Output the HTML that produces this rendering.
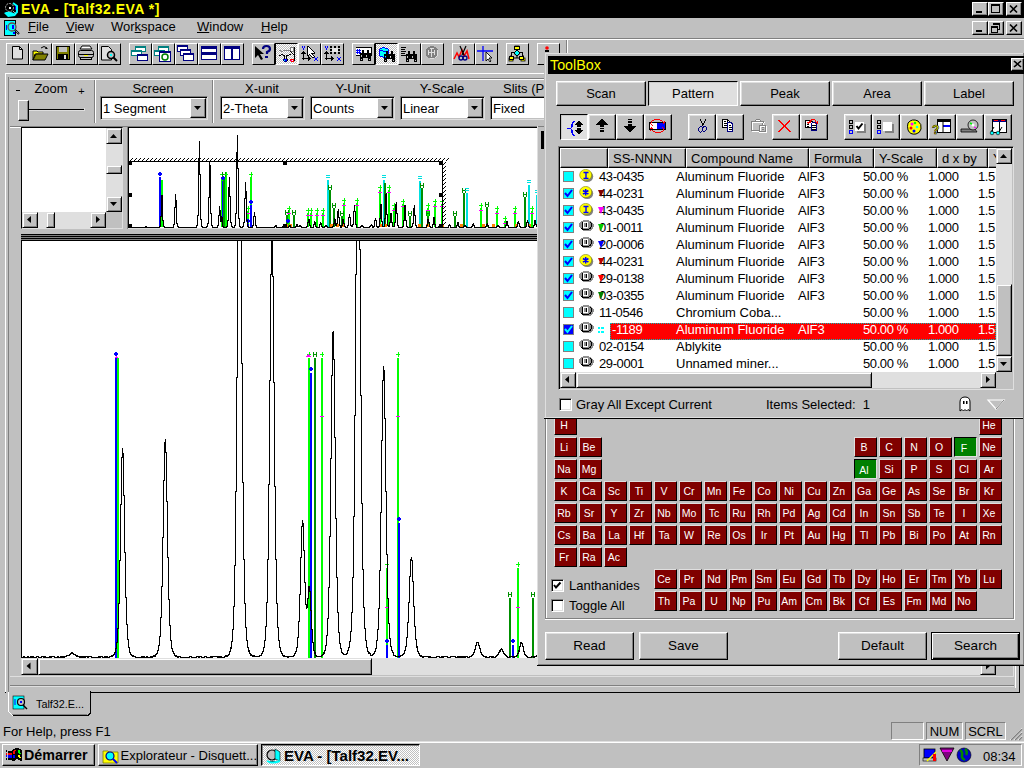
<!DOCTYPE html>
<html><head><meta charset="utf-8"><style>
html,body{margin:0;padding:0;width:1024px;height:768px;overflow:hidden;background:#c0c0c0}
div{position:absolute;box-sizing:border-box}
.t{white-space:pre;line-height:1;font-family:"Liberation Sans",sans-serif}
u{text-decoration:underline;text-underline-offset:1px}
</style></head><body>
<div style="left:0px;top:0px;width:1024px;height:768px;background:#c0c0c0"></div>
<div style="left:0px;top:0px;width:1024px;height:18px;background:#000"></div>
<div class="t" style="left:21px;top:2.15px;font-size:14px;color:#ff0;font-weight:700;letter-spacing:0.5px">EVA - [Talf32.EVA *]</div>
<div style="left:972px;top:2px;width:16px;height:14px;background:#c0c0c0;border-style:solid;border-width:1px;border-color:#fff #000 #000 #fff;box-shadow:inset -1px -1px #808080;"></div>
<div style="left:988px;top:2px;width:16px;height:14px;background:#c0c0c0;border-style:solid;border-width:1px;border-color:#fff #000 #000 #fff;box-shadow:inset -1px -1px #808080;"></div>
<div style="left:1006px;top:2px;width:16px;height:14px;background:#c0c0c0;border-style:solid;border-width:1px;border-color:#fff #000 #000 #fff;box-shadow:inset -1px -1px #808080;"></div>
<div style="left:976px;top:11px;width:6px;height:2px;background:#000"></div>
<div style="left:991px;top:4px;width:9px;height:9px;border:1px solid #000;border-top-width:2px;background:transparent"></div>
<svg style="position:absolute;left:1006px;top:2px;shape-rendering:auto" width="16" height="14" viewBox="0 0 16 14" shape-rendering="crispEdges"><path d="M4 3.5l7 7M11 3.5l-7 7" stroke="#000" stroke-width="1.7"/></svg>
<div class="t" style="left:28px;top:20.00px;font-size:13px;color:#000;font-weight:400;"><u>F</u>ile</div>
<div class="t" style="left:66px;top:20.00px;font-size:13px;color:#000;font-weight:400;"><u>V</u>iew</div>
<div class="t" style="left:111px;top:20.00px;font-size:13px;color:#000;font-weight:400;">Wor<u>k</u>space</div>
<div class="t" style="left:197px;top:20.00px;font-size:13px;color:#000;font-weight:400;"><u>W</u>indow</div>
<div class="t" style="left:261px;top:20.00px;font-size:13px;color:#000;font-weight:400;"><u>H</u>elp</div>
<div style="left:972px;top:21px;width:16px;height:14px;background:#c0c0c0;border-style:solid;border-width:1px;border-color:#fff #000 #000 #fff;box-shadow:inset -1px -1px #808080;"></div>
<div style="left:988px;top:21px;width:16px;height:14px;background:#c0c0c0;border-style:solid;border-width:1px;border-color:#fff #000 #000 #fff;box-shadow:inset -1px -1px #808080;"></div>
<div style="left:1006px;top:21px;width:16px;height:14px;background:#c0c0c0;border-style:solid;border-width:1px;border-color:#fff #000 #000 #fff;box-shadow:inset -1px -1px #808080;"></div>
<div style="left:976px;top:30px;width:6px;height:2px;background:#000"></div>
<svg style="position:absolute;left:988px;top:21px;" width="16" height="14" viewBox="0 0 16 14" shape-rendering="crispEdges"><path d="M5.5 2.5h6v6h-2" fill="none" stroke="#000"/><rect x="5" y="2" width="7" height="2" fill="#000"/><rect x="3.5" y="5.5" width="6" height="6" fill="none" stroke="#000"/><rect x="3" y="5" width="7" height="2" fill="#000"/></svg>
<svg style="position:absolute;left:1006px;top:21px;shape-rendering:auto" width="16" height="14" viewBox="0 0 16 14" shape-rendering="crispEdges"><path d="M4 3.5l7 7M11 3.5l-7 7" stroke="#000" stroke-width="1.7"/></svg>
<div style="left:0px;top:38px;width:1024px;height:1px;background:#808080"></div>
<div style="left:0px;top:39px;width:1024px;height:1px;background:#fff"></div>
<div style="left:6px;top:43px;width:23px;height:22px;background:#c0c0c0;border-style:solid;border-width:1px;border-color:#fff #000 #000 #fff;"></div>
<svg style="position:absolute;left:6px;top:43px;shape-rendering:auto" width="23" height="22" viewBox="0 0 23 22" shape-rendering="crispEdges"><path d="M6.5 3.5h7l3 3v9.5h-10z" fill="#dfdfdf" stroke="#000"/><path d="M13.5 3.5v3h3" fill="none" stroke="#000"/></svg>
<div style="left:29px;top:43px;width:23px;height:22px;background:#c0c0c0;border-style:solid;border-width:1px;border-color:#fff #000 #000 #fff;"></div>
<svg style="position:absolute;left:29px;top:43px;shape-rendering:auto" width="23" height="22" viewBox="0 0 23 22" shape-rendering="crispEdges"><path d="M4 8h4l1 1h5v2h-8l-2 6z" fill="#ff0" stroke="#000"/><path d="M4 17l3-6h12l-3 6z" fill="#808000" stroke="#000"/><path d="M12 5q3-3 6 0" fill="none" stroke="#000"/><path d="M17 4l2 2h-3z" fill="#000"/></svg>
<div style="left:52px;top:43px;width:23px;height:22px;background:#c0c0c0;border-style:solid;border-width:1px;border-color:#fff #000 #000 #fff;"></div>
<svg style="position:absolute;left:52px;top:43px;shape-rendering:auto" width="23" height="22" viewBox="0 0 23 22" shape-rendering="crispEdges"><rect x="4.5" y="3.5" width="13" height="13" fill="#808000" stroke="#000"/><rect x="7" y="4" width="8" height="5" fill="#c0c0c0"/><rect x="6" y="11" width="10" height="6" fill="#000"/><rect x="12" y="12" width="2" height="4" fill="#dfdfdf"/></svg>
<div style="left:75px;top:43px;width:23px;height:22px;background:#c0c0c0;border-style:solid;border-width:1px;border-color:#fff #000 #000 #fff;"></div>
<svg style="position:absolute;left:75px;top:43px;shape-rendering:auto" width="23" height="22" viewBox="0 0 23 22" shape-rendering="crispEdges"><path d="M7 3h8l2 3h-12z" fill="#fff" stroke="#000"/><rect x="3.5" y="7.5" width="15" height="7" rx="2" fill="#c0c0c0" stroke="#000"/><rect x="4" y="11" width="14" height="1" fill="#000"/><rect x="9" y="12" width="4" height="1" fill="#ff0"/><rect x="5.5" y="14.5" width="11" height="2" fill="#c0c0c0" stroke="#000"/></svg>
<div style="left:98px;top:43px;width:23px;height:22px;background:#c0c0c0;border-style:solid;border-width:1px;border-color:#fff #000 #000 #fff;"></div>
<svg style="position:absolute;left:98px;top:43px;shape-rendering:auto" width="23" height="22" viewBox="0 0 23 22" shape-rendering="crispEdges"><path d="M3.5 3.5h7l3 3v10.5h-10z" fill="#dfdfdf" stroke="#000"/><circle cx="13" cy="12" r="3.5" fill="#c0c0c0" stroke="#000" stroke-width="1.5"/><rect x="12" y="11" width="2" height="2" fill="#0ff"/><path d="M15 14l4 4" stroke="#000" stroke-width="2"/></svg>
<div style="left:129px;top:43px;width:23px;height:22px;background:#c0c0c0;border-style:solid;border-width:1px;border-color:#fff #000 #000 #fff;"></div>
<svg style="position:absolute;left:129px;top:43px;shape-rendering:auto" width="23" height="22" viewBox="0 0 23 22" shape-rendering="crispEdges"><rect x="6.5" y="3.5" width="10" height="5" fill="#fff" stroke="#008080"/><rect x="6" y="3" width="11" height="2" fill="#008080"/><rect x="2.5" y="7.5" width="10" height="5" fill="#fff" stroke="#008080"/><rect x="2" y="7" width="11" height="2" fill="#008080"/><rect x="8.5" y="11.5" width="10" height="6" fill="#fff" stroke="#000080"/><rect x="8" y="11" width="11" height="2" fill="#000080"/></svg>
<div style="left:152px;top:43px;width:23px;height:22px;background:#c0c0c0;border-style:solid;border-width:1px;border-color:#fff #000 #000 #fff;"></div>
<svg style="position:absolute;left:152px;top:43px;shape-rendering:auto" width="23" height="22" viewBox="0 0 23 22" shape-rendering="crispEdges"><rect x="6.5" y="3.5" width="10" height="5" fill="#fff" stroke="#008080"/><rect x="6" y="3" width="11" height="2" fill="#008080"/><rect x="2.5" y="7.5" width="10" height="5" fill="#fff" stroke="#008080"/><rect x="2" y="7" width="11" height="2" fill="#008080"/><rect x="7.5" y="8.5" width="11" height="10" fill="#fff" stroke="#000080"/><rect x="7" y="8" width="12" height="2" fill="#000080"/><circle cx="13" cy="14" r="3" fill="none" stroke="#008000" stroke-width="1.5"/></svg>
<div style="left:175px;top:43px;width:23px;height:22px;background:#c0c0c0;border-style:solid;border-width:1px;border-color:#fff #000 #000 #fff;"></div>
<svg style="position:absolute;left:175px;top:43px;shape-rendering:auto" width="23" height="22" viewBox="0 0 23 22" shape-rendering="crispEdges"><rect x="2.5" y="2.5" width="10" height="6" fill="#fff" stroke="#000080"/><rect x="2" y="2" width="11" height="2" fill="#000080"/><rect x="5.5" y="6.5" width="10" height="6" fill="#fff" stroke="#000080"/><rect x="5" y="6" width="11" height="2" fill="#000080"/><rect x="8.5" y="10.5" width="10" height="7" fill="#fff" stroke="#000080"/><rect x="8" y="10" width="11" height="2" fill="#000080"/></svg>
<div style="left:198px;top:43px;width:23px;height:22px;background:#c0c0c0;border-style:solid;border-width:1px;border-color:#fff #000 #000 #fff;"></div>
<svg style="position:absolute;left:198px;top:43px;shape-rendering:auto" width="23" height="22" viewBox="0 0 23 22" shape-rendering="crispEdges"><rect x="3.5" y="3.5" width="15" height="13" fill="#fff" stroke="#000080"/><rect x="3" y="3" width="16" height="3" fill="#000080"/><rect x="3" y="9" width="16" height="3" fill="#000080"/></svg>
<div style="left:221px;top:43px;width:23px;height:22px;background:#c0c0c0;border-style:solid;border-width:1px;border-color:#fff #000 #000 #fff;"></div>
<svg style="position:absolute;left:221px;top:43px;shape-rendering:auto" width="23" height="22" viewBox="0 0 23 22" shape-rendering="crispEdges"><rect x="3.5" y="3.5" width="15" height="13" fill="#fff" stroke="#000080"/><rect x="3" y="3" width="16" height="3" fill="#000080"/><rect x="10" y="3" width="2" height="14" fill="#000080"/></svg>
<div style="left:252px;top:43px;width:23px;height:22px;background:#c0c0c0;border-style:solid;border-width:1px;border-color:#fff #000 #000 #fff;"></div>
<svg style="position:absolute;left:252px;top:43px;shape-rendering:auto" width="23" height="22" viewBox="0 0 23 22" shape-rendering="crispEdges"><path d="M3 3v12l3-3 3 5 2-1-3-5h4z" fill="#000"/><path d="M11 6q0-3 3.5-3t3.5 3q0 2-3 3v2" fill="none" stroke="#000080" stroke-width="2.2"/><rect x="13" y="13" width="3" height="2" fill="#000080"/></svg>
<div style="left:275px;top:43px;width:23px;height:22px;background-color:#fff;background-image:repeating-conic-gradient(#c0c0c0 0 25%, #fff 0 50%);background-size:2px 2px;border-style:solid;border-width:1px;border-color:#000 #fff #fff #000;"></div>
<svg style="position:absolute;left:276px;top:44px;shape-rendering:auto" width="23" height="22" viewBox="0 0 23 22" shape-rendering="crispEdges"></svg>
<div style="left:298px;top:43px;width:23px;height:22px;background:#c0c0c0;border-style:solid;border-width:1px;border-color:#fff #000 #000 #fff;"></div>
<svg style="position:absolute;left:298px;top:43px;shape-rendering:auto" width="23" height="22" viewBox="0 0 23 22" shape-rendering="crispEdges"></svg>
<div style="left:321px;top:43px;width:23px;height:22px;background:#c0c0c0;border-style:solid;border-width:1px;border-color:#fff #000 #000 #fff;"></div>
<svg style="position:absolute;left:321px;top:43px;shape-rendering:auto" width="23" height="22" viewBox="0 0 23 22" shape-rendering="crispEdges"></svg>
<div style="left:352px;top:43px;width:23px;height:22px;background:#c0c0c0;border-style:solid;border-width:1px;border-color:#fff #000 #000 #fff;"></div>
<svg style="position:absolute;left:352px;top:43px;shape-rendering:auto" width="23" height="22" viewBox="0 0 23 22" shape-rendering="crispEdges"></svg>
<div style="left:375px;top:43px;width:23px;height:22px;background-color:#fff;background-image:repeating-conic-gradient(#c0c0c0 0 25%, #fff 0 50%);background-size:2px 2px;border-style:solid;border-width:1px;border-color:#000 #fff #fff #000;"></div>
<svg style="position:absolute;left:376px;top:44px;shape-rendering:auto" width="23" height="22" viewBox="0 0 23 22" shape-rendering="crispEdges"></svg>
<div style="left:398px;top:43px;width:23px;height:22px;background:#c0c0c0;border-style:solid;border-width:1px;border-color:#fff #000 #000 #fff;"></div>
<svg style="position:absolute;left:398px;top:43px;shape-rendering:auto" width="23" height="22" viewBox="0 0 23 22" shape-rendering="crispEdges"></svg>
<div style="left:421px;top:43px;width:23px;height:22px;background:#c0c0c0;border-style:solid;border-width:1px;border-color:#fff #000 #000 #fff;"></div>
<svg style="position:absolute;left:421px;top:43px;shape-rendering:auto" width="23" height="22" viewBox="0 0 23 22" shape-rendering="crispEdges"></svg>
<div style="left:452px;top:43px;width:23px;height:22px;background:#c0c0c0;border-style:solid;border-width:1px;border-color:#fff #000 #000 #fff;"></div>
<svg style="position:absolute;left:452px;top:43px;shape-rendering:auto" width="23" height="22" viewBox="0 0 23 22" shape-rendering="crispEdges"><path d="M2 16l3-6 2 4 3-7 2 6 3-5 2 8" fill="none" stroke="#f00" stroke-width="1.5"/><path d="M8 3l4 9M14 3l-4 9" stroke="#000" stroke-width="1.2"/><circle cx="9" cy="15" r="2" fill="none" stroke="#000080" stroke-width="1.3"/><circle cx="13" cy="15" r="2" fill="none" stroke="#000080" stroke-width="1.3"/></svg>
<div style="left:475px;top:43px;width:23px;height:22px;background:#c0c0c0;border-style:solid;border-width:1px;border-color:#fff #000 #000 #fff;"></div>
<svg style="position:absolute;left:475px;top:43px;shape-rendering:auto" width="23" height="22" viewBox="0 0 23 22" shape-rendering="crispEdges"><path d="M2 8h16M8 3v15" stroke="#00f" stroke-width="1.3"/><path d="M11 9v9l2-2 2 3 1-1-2-3h3z" fill="#fff" stroke="#000" stroke-width="0.9"/></svg>
<div style="left:506px;top:43px;width:23px;height:22px;background:#c0c0c0;border-style:solid;border-width:1px;border-color:#fff #000 #000 #fff;"></div>
<svg style="position:absolute;left:506px;top:43px;shape-rendering:auto" width="23" height="22" viewBox="0 0 23 22" shape-rendering="crispEdges"><rect x="9" y="3" width="4" height="3" fill="#ff0" stroke="#000" stroke-width="0.8"/><path d="M11 6v2M11 13v2M5 15h12M5 12v3M17 12v3" stroke="#000" fill="none"/><path d="M11 8l3 2.5-3 2.5-3-2.5z" fill="#0ff" stroke="#000" stroke-width="0.8"/><rect x="3" y="15" width="4" height="3" fill="#ff0" stroke="#000" stroke-width="0.8"/><rect x="15" y="15" width="4" height="3" fill="#ff0" stroke="#000" stroke-width="0.8"/></svg>
<div style="left:537px;top:43px;width:23px;height:22px;background:#c0c0c0;border-style:solid;border-width:1px;border-color:#fff #000 #000 #fff;"></div>
<svg style="position:absolute;left:537px;top:43px;shape-rendering:auto" width="23" height="22" viewBox="0 0 23 22" shape-rendering="crispEdges"><circle cx="10" cy="5" r="1.8" fill="#f00"/><rect x="8" y="7" width="4" height="2" fill="#000"/></svg>
<div style="left:356px;top:47px;width:16px;height:1px;background:#000"></div>
<div style="left:356px;top:48px;width:15px;height:7px;background:#fff"></div>
<div style="left:356px;top:55px;width:5px;height:1px;background:#000"></div>
<div style="left:371px;top:47px;width:1px;height:9px;background:#000"></div>
<svg style="position:absolute;left:356px;top:49px;" width="5" height="5" viewBox="0 0 5 5" shape-rendering="crispEdges"><path d="M1 0h1v1h-1zM3 0h1v1h-1zM0 1h5v1h-5zM1 2h1v1h-1zM3 2h1v1h-1zM0 3h5v1h-5zM1 4h1v1h-1zM3 4h1v1h-1z" fill="#00f"/></svg>
<svg style="position:absolute;left:360px;top:50px;" width="11" height="11" viewBox="0 0 11 11" shape-rendering="crispEdges"><path d="M2 0h2v1h-2zM7 0h2v1h-2zM2 1h2v1h-2zM7 1h2v1h-2zM2 2h2v1h-2zM7 2h2v1h-2zM0 3h11v1h-11zM0 4h11v1h-11zM0 5h1v1h-1zM2 5h4v1h-4zM7 5h4v1h-4zM0 6h1v1h-1zM2 6h4v1h-4zM7 6h4v1h-4zM0 7h11v1h-11zM0 8h3v1h-3zM8 8h3v1h-3zM0 9h1v1h-1zM2 9h1v1h-1zM8 9h1v1h-1zM10 9h1v1h-1zM0 10h3v1h-3zM8 10h3v1h-3z" fill="#000"/></svg>
<svg style="position:absolute;left:379px;top:47px;" width="11" height="11" viewBox="0 0 11 11" shape-rendering="crispEdges"><path d="M3 0h3v1h-3zM1 1h2v1h-2zM6 1h3v1h-3zM0 2h1v1h-1zM9 2h1v1h-1zM0 3h4v1h-4zM9 3h1v1h-1zM0 4h1v1h-1zM4 4h4v1h-4zM9 4h1v1h-1zM0 5h1v1h-1zM9 5h1v1h-1zM0 6h1v1h-1zM9 6h1v1h-1zM0 7h1v1h-1zM9 7h1v1h-1zM0 8h1v1h-1zM9 8h1v1h-1zM1 9h3v1h-3zM8 9h1v1h-1zM4 10h4v1h-4z" fill="#00f"/><path d="M3 1h3v1h-3zM1 2h8v1h-8zM4 3h5v1h-5zM1 4h3v1h-3zM8 4h1v1h-1zM1 5h8v1h-8zM1 6h8v1h-8zM1 7h8v1h-8zM1 8h8v1h-8zM4 9h4v1h-4z" fill="#0ff"/></svg>
<svg style="position:absolute;left:384px;top:51px;" width="11" height="11" viewBox="0 0 11 11" shape-rendering="crispEdges"><path d="M2 0h2v1h-2zM7 0h2v1h-2zM2 1h2v1h-2zM7 1h2v1h-2zM2 2h2v1h-2zM7 2h2v1h-2zM0 3h11v1h-11zM0 4h11v1h-11zM0 5h1v1h-1zM2 5h4v1h-4zM7 5h4v1h-4zM0 6h1v1h-1zM2 6h4v1h-4zM7 6h4v1h-4zM0 7h11v1h-11zM0 8h3v1h-3zM8 8h3v1h-3zM0 9h1v1h-1zM2 9h1v1h-1zM8 9h1v1h-1zM10 9h1v1h-1zM0 10h3v1h-3zM8 10h3v1h-3z" fill="#000"/></svg>
<svg style="position:absolute;left:401px;top:47px;" width="6" height="9" viewBox="0 0 6 9" shape-rendering="crispEdges"><path d="M0 0h5v1h-5zM0 2h4v1h-4zM0 4h5v1h-5zM0 6h4v1h-4zM0 8h6v1h-6z" fill="#000"/></svg>
<svg style="position:absolute;left:406px;top:51px;" width="11" height="11" viewBox="0 0 11 11" shape-rendering="crispEdges"><path d="M2 0h2v1h-2zM7 0h2v1h-2zM2 1h2v1h-2zM7 1h2v1h-2zM2 2h2v1h-2zM7 2h2v1h-2zM0 3h11v1h-11zM0 4h11v1h-11zM0 5h1v1h-1zM2 5h4v1h-4zM7 5h4v1h-4zM0 6h1v1h-1zM2 6h4v1h-4zM7 6h4v1h-4zM0 7h11v1h-11zM0 8h3v1h-3zM8 8h3v1h-3zM0 9h1v1h-1zM2 9h1v1h-1zM8 9h1v1h-1zM10 9h1v1h-1zM0 10h3v1h-3zM8 10h3v1h-3z" fill="#000"/></svg>
<svg style="position:absolute;left:426px;top:46px;" width="12" height="13" viewBox="0 0 12 13" shape-rendering="crispEdges"><path d="M4 0h4v1h-4zM2 1h8v1h-8zM1 2h3v1h-3zM8 2h3v1h-3zM0 3h5v1h-5zM6 3h6v1h-6zM0 4h2v1h-2zM3 4h2v1h-2zM6 4h2v1h-2zM9 4h2v1h-2zM0 5h2v1h-2zM3 5h2v1h-2zM6 5h2v1h-2zM9 5h2v1h-2zM0 6h2v1h-2zM9 6h2v1h-2zM0 7h2v1h-2zM3 7h2v1h-2zM6 7h2v1h-2zM9 7h2v1h-2zM0 8h2v1h-2zM3 8h2v1h-2zM6 8h2v1h-2zM9 8h2v1h-2zM0 9h5v1h-5zM6 9h5v1h-5zM1 10h4v1h-4zM6 10h4v1h-4zM2 11h7v1h-7z" fill="#808080"/><path d="M4 2h4v1h-4zM5 3h1v1h-1zM2 4h1v1h-1zM5 4h1v1h-1zM8 4h1v1h-1zM11 4h1v1h-1zM2 5h1v1h-1zM5 5h1v1h-1zM8 5h1v1h-1zM11 5h1v1h-1zM2 6h7v1h-7zM11 6h1v1h-1zM2 7h1v1h-1zM5 7h1v1h-1zM8 7h1v1h-1zM11 7h1v1h-1zM2 8h1v1h-1zM5 8h1v1h-1zM8 8h1v1h-1zM11 8h1v1h-1zM5 9h1v1h-1zM11 9h1v1h-1zM5 10h1v1h-1zM10 10h1v1h-1zM9 11h1v1h-1zM4 12h4v1h-4z" fill="#dfdfdf"/></svg>
<svg style="position:absolute;left:298px;top:46px;" width="14" height="15" viewBox="0 0 14 15" shape-rendering="crispEdges"><path d="M4 0h1v1h-1zM6 0h1v1h-1zM4 1h1v1h-1zM6 1h1v1h-1zM5 2h1v1h-1zM5 3h1v1h-1z" fill="#00f"/><path d="M5 5h1v1h-1zM4 6h3v1h-3zM3 7h5v1h-5zM5 8h1v1h-1zM5 9h1v1h-1zM5 10h1v1h-1zM10 10h1v1h-1zM5 11h1v1h-1zM10 11h2v1h-2zM4 12h9v1h-9zM5 13h1v1h-1zM10 13h2v1h-2zM10 14h1v1h-1z" fill="#000"/></svg>
<svg style="position:absolute;left:314px;top:57px;" width="4" height="4" viewBox="0 0 4 4" shape-rendering="crispEdges"><path d="M0 0h1v1h-1zM3 0h1v1h-1zM1 1h2v1h-2zM1 2h2v1h-2zM0 3h1v1h-1zM3 3h1v1h-1z" fill="#00f"/></svg>
<svg style="position:absolute;left:321px;top:46px;" width="14" height="15" viewBox="0 0 14 15" shape-rendering="crispEdges"><path d="M4 0h1v1h-1zM6 0h1v1h-1zM4 1h1v1h-1zM6 1h1v1h-1zM5 2h1v1h-1zM5 3h1v1h-1z" fill="#00f"/><path d="M5 5h1v1h-1zM4 6h3v1h-3zM3 7h5v1h-5zM5 8h1v1h-1zM5 9h1v1h-1zM5 10h1v1h-1zM10 10h1v1h-1zM5 11h1v1h-1zM10 11h2v1h-2zM4 12h9v1h-9zM5 13h1v1h-1zM10 13h2v1h-2zM10 14h1v1h-1z" fill="#000"/></svg>
<svg style="position:absolute;left:337px;top:57px;" width="4" height="4" viewBox="0 0 4 4" shape-rendering="crispEdges"><path d="M0 0h1v1h-1zM3 0h1v1h-1zM1 1h2v1h-2zM1 2h2v1h-2zM0 3h1v1h-1zM3 3h1v1h-1z" fill="#00f"/></svg>
<svg style="position:absolute;left:307px;top:46px;" width="8" height="12" viewBox="0 0 8 12" shape-rendering="crispEdges"><path d="M0 0h2v1h-2zM0 1h1v1h-1zM2 1h1v1h-1zM0 2h1v1h-1zM3 2h1v1h-1zM0 3h1v1h-1zM4 3h1v1h-1zM0 4h1v1h-1zM5 4h1v1h-1zM0 5h1v1h-1zM6 5h1v1h-1zM0 6h1v1h-1zM7 6h1v1h-1zM0 7h1v1h-1zM4 7h4v1h-4zM0 8h1v1h-1zM2 8h1v1h-1zM5 8h1v1h-1zM0 9h2v1h-2zM3 9h1v1h-1zM6 9h1v1h-1zM4 10h1v1h-1zM7 10h1v1h-1zM5 11h2v1h-2z" fill="#000"/><path d="M1 1h1v1h-1zM1 2h2v1h-2zM1 3h3v1h-3zM1 4h4v1h-4zM1 5h5v1h-5zM1 6h6v1h-6zM1 7h3v1h-3zM1 8h1v1h-1zM3 8h2v1h-2zM4 9h2v1h-2zM5 10h2v1h-2z" fill="#fff"/></svg>
<svg style="position:absolute;left:330px;top:46px;" width="10" height="8" viewBox="0 0 10 8" shape-rendering="crispEdges"><path d="M0 0h2v1h-2zM4 0h2v1h-2zM8 0h2v1h-2zM0 1h2v1h-2zM4 1h2v1h-2zM8 1h2v1h-2zM0 3h2v1h-2zM8 3h2v1h-2zM0 4h2v1h-2zM8 4h2v1h-2zM0 6h2v1h-2zM4 6h2v1h-2zM8 6h2v1h-2zM0 7h2v1h-2zM4 7h2v1h-2zM8 7h2v1h-2z" fill="#000"/><path d="M2 2h6v1h-6zM2 3h6v1h-6zM2 4h6v1h-6zM2 5h6v1h-6z" fill="#e8e8e8"/></svg>
<svg style="position:absolute;left:279px;top:47px;" width="16" height="15" viewBox="0 0 16 15" shape-rendering="crispEdges"><path d="M11 0h4v1h-4zM11 1h1v1h-1zM14 1h1v1h-1zM11 2h1v1h-1zM14 2h1v1h-1zM0 3h2v1h-2zM4 3h8v1h-8zM14 3h1v1h-1zM2 4h2v1h-2zM12 4h3v1h-3z" fill="#808080"/><path d="M15 0h1v1h-1zM15 1h1v1h-1zM15 2h1v1h-1zM15 3h1v1h-1zM11 4h1v1h-1zM15 4h1v1h-1zM12 5h1v1h-1zM15 5h1v1h-1zM13 6h1v1h-1zM15 6h1v1h-1zM2 7h2v1h-2zM10 7h2v1h-2zM14 7h2v1h-2zM0 8h2v1h-2zM4 8h2v1h-2zM7 8h3v1h-3zM15 8h1v1h-1zM5 9h1v1h-1zM7 9h1v1h-1zM15 9h1v1h-1zM5 10h1v1h-1zM7 10h1v1h-1zM15 10h1v1h-1zM5 11h1v1h-1zM7 11h1v1h-1zM15 11h1v1h-1zM8 12h1v1h-1zM15 12h1v1h-1zM8 13h1v1h-1zM15 13h1v1h-1z" fill="#000"/><path d="M12 1h2v1h-2zM12 2h2v1h-2zM12 3h2v1h-2zM13 13h1v1h-1z" fill="#fff"/><path d="M4 12h1v1h-1zM4 13h1v1h-1zM5 14h3v1h-3z" fill="#000080"/><path d="M5 12h3v1h-3zM6 13h2v1h-2z" fill="#00f"/><path d="M11 12h4v1h-4zM11 13h1v1h-1zM14 13h1v1h-1zM12 14h3v1h-3z" fill="#f00"/><path d="M5 13h1v1h-1z" fill="#0ff"/><path d="M12 13h1v1h-1z" fill="#f0f"/></svg>
<svg style="position:absolute;left:509px;top:46px;" width="15" height="14" viewBox="0 0 15 14" shape-rendering="crispEdges"><path d="M5 0h6v1h-6zM5 1h1v1h-1zM10 1h1v1h-1zM5 2h1v1h-1zM10 2h1v1h-1zM5 3h6v1h-6zM7 4h2v1h-2zM6 5h1v1h-1zM9 5h1v1h-1zM2 6h4v1h-4zM10 6h4v1h-4zM2 7h1v1h-1zM5 7h1v1h-1zM10 7h1v1h-1zM13 7h1v1h-1zM2 8h1v1h-1zM6 8h1v1h-1zM9 8h1v1h-1zM13 8h1v1h-1zM2 9h1v1h-1zM7 9h2v1h-2zM13 9h1v1h-1zM0 10h5v1h-5zM10 10h5v1h-5zM0 11h1v1h-1zM4 11h1v1h-1zM10 11h1v1h-1zM14 11h1v1h-1zM0 12h1v1h-1zM4 12h1v1h-1zM10 12h1v1h-1zM14 12h1v1h-1zM0 13h5v1h-5zM10 13h5v1h-5z" fill="#000"/><path d="M6 1h4v1h-4zM6 2h4v1h-4zM1 11h3v1h-3zM11 11h3v1h-3zM1 12h3v1h-3zM11 12h3v1h-3z" fill="#ff0"/><path d="M7 5h2v1h-2zM6 6h4v1h-4zM6 7h4v1h-4zM7 8h2v1h-2z" fill="#0ff"/></svg>
<div style="left:566px;top:40px;width:1px;height:13px;background:#808080"></div>
<div style="left:567px;top:40px;width:1px;height:13px;background:#fff"></div>
<div style="left:5px;top:73px;width:540px;height:1px;background:#fff"></div>
<div style="left:5px;top:73px;width:1px;height:620px;background:#fff"></div>
<div style="left:8px;top:77px;width:1px;height:615px;background:#808080"></div>
<div style="left:10px;top:78px;width:535px;height:1px;background:#808080"></div>
<div style="left:10px;top:79px;width:535px;height:1px;background:#fff"></div>
<div class="t" style="left:-149.00px;width:400px;text-align:center;top:82.00px;font-size:13px;color:#000;font-weight:400;">Zoom</div>
<div style="left:16px;top:90px;width:4px;height:1px;background:#000"></div>
<div class="t" style="left:71.50px;width:20px;text-align:center;top:85.69px;font-size:11px;color:#000;font-weight:400;">+</div>
<div style="left:28px;top:109px;width:57px;height:1px;background:#000"></div>
<div style="left:28px;top:110px;width:57px;height:1px;background:#dfdfdf"></div>
<div style="left:84px;top:108px;width:1px;height:3px;background:#dfdfdf"></div>
<div style="left:27px;top:108px;width:1px;height:3px;background:#808080"></div>
<div style="left:18px;top:100px;width:11px;height:21px;background:#c0c0c0;border-style:solid;border-width:1px;border-color:#fff #000 #000 #fff;box-shadow:inset -1px -1px #808080;"></div>
<div style="left:94px;top:80px;width:1px;height:43px;background:#808080"></div>
<div style="left:95px;top:80px;width:1px;height:43px;background:#fff"></div>
<div style="left:212px;top:80px;width:1px;height:43px;background:#808080"></div>
<div style="left:213px;top:80px;width:1px;height:43px;background:#fff"></div>
<div class="t" style="left:-47.00px;width:400px;text-align:center;top:82.00px;font-size:13px;color:#000;font-weight:400;">Screen</div>
<div style="left:100px;top:96px;width:108px;height:24px;background:#fff;border-style:solid;border-width:1px;border-color:#808080 #dfdfdf #dfdfdf #808080;box-shadow:inset 1px 1px #000, inset -1px -1px #c0c0c0;"></div>
<div class="t" style="left:103px;top:102.00px;font-size:13px;color:#000;font-weight:400;">1 Segment</div>
<div style="left:190px;top:98px;width:16px;height:20px;background:#c0c0c0;border-style:solid;border-width:1px;border-color:#fff #000 #000 #fff;box-shadow:inset -1px -1px #808080;"></div>
<svg style="position:absolute;left:190px;top:98px;" width="16" height="20" viewBox="0 0 16 20" shape-rendering="crispEdges"><path d="M4 8h7l-3.5 4z" fill="#000" shape-rendering="auto"/></svg>
<div class="t" style="left:62.00px;width:400px;text-align:center;top:82.00px;font-size:13px;color:#000;font-weight:400;">X-unit</div>
<div style="left:220px;top:96px;width:85px;height:24px;background:#fff;border-style:solid;border-width:1px;border-color:#808080 #dfdfdf #dfdfdf #808080;box-shadow:inset 1px 1px #000, inset -1px -1px #c0c0c0;"></div>
<div class="t" style="left:223px;top:102.00px;font-size:13px;color:#000;font-weight:400;">2-Theta</div>
<div style="left:287px;top:98px;width:16px;height:20px;background:#c0c0c0;border-style:solid;border-width:1px;border-color:#fff #000 #000 #fff;box-shadow:inset -1px -1px #808080;"></div>
<svg style="position:absolute;left:287px;top:98px;" width="16" height="20" viewBox="0 0 16 20" shape-rendering="crispEdges"><path d="M4 8h7l-3.5 4z" fill="#000" shape-rendering="auto"/></svg>
<div class="t" style="left:153.00px;width:400px;text-align:center;top:82.00px;font-size:13px;color:#000;font-weight:400;">Y-Unit</div>
<div style="left:310px;top:96px;width:85px;height:24px;background:#fff;border-style:solid;border-width:1px;border-color:#808080 #dfdfdf #dfdfdf #808080;box-shadow:inset 1px 1px #000, inset -1px -1px #c0c0c0;"></div>
<div class="t" style="left:313px;top:102.00px;font-size:13px;color:#000;font-weight:400;">Counts</div>
<div style="left:377px;top:98px;width:16px;height:20px;background:#c0c0c0;border-style:solid;border-width:1px;border-color:#fff #000 #000 #fff;box-shadow:inset -1px -1px #808080;"></div>
<svg style="position:absolute;left:377px;top:98px;" width="16" height="20" viewBox="0 0 16 20" shape-rendering="crispEdges"><path d="M4 8h7l-3.5 4z" fill="#000" shape-rendering="auto"/></svg>
<div class="t" style="left:242.00px;width:400px;text-align:center;top:82.00px;font-size:13px;color:#000;font-weight:400;">Y-Scale</div>
<div style="left:400px;top:96px;width:85px;height:24px;background:#fff;border-style:solid;border-width:1px;border-color:#808080 #dfdfdf #dfdfdf #808080;box-shadow:inset 1px 1px #000, inset -1px -1px #c0c0c0;"></div>
<div class="t" style="left:403px;top:102.00px;font-size:13px;color:#000;font-weight:400;">Linear</div>
<div style="left:467px;top:98px;width:16px;height:20px;background:#c0c0c0;border-style:solid;border-width:1px;border-color:#fff #000 #000 #fff;box-shadow:inset -1px -1px #808080;"></div>
<svg style="position:absolute;left:467px;top:98px;" width="16" height="20" viewBox="0 0 16 20" shape-rendering="crispEdges"><path d="M4 8h7l-3.5 4z" fill="#000" shape-rendering="auto"/></svg>
<div class="t" style="left:503px;top:82.00px;font-size:13px;color:#000;font-weight:400;">Slits (P</div>
<div style="left:490px;top:96px;width:80px;height:24px;background:#fff;border-style:solid;border-width:1px;border-color:#808080 #dfdfdf #dfdfdf #808080;box-shadow:inset 1px 1px #000, inset -1px -1px #c0c0c0;"></div>
<div class="t" style="left:493px;top:102.00px;font-size:13px;color:#000;font-weight:400;">Fixed</div>
<div style="left:10px;top:126px;width:535px;height:1px;background:#808080"></div>
<div style="left:10px;top:127px;width:11px;height:1px;background:#fff"></div>
<div style="left:21px;top:127px;width:102px;height:102px;background:#fff;border-style:solid;border-width:1px;border-color:#000 #dfdfdf #dfdfdf #000"></div>
<div style="left:106px;top:128px;width:16px;height:84px;background:#dfdfdf"></div>
<div style="left:106px;top:128px;width:16px;height:16px;background:#c0c0c0;border-style:solid;border-width:1px;border-color:#dfdfdf #000 #000 #dfdfdf;box-shadow:inset 1px 1px #fff, inset -1px -1px #808080"></div>
<svg style="position:absolute;left:106px;top:128px;shape-rendering:auto" width="16" height="16" viewBox="0 0 16 16" shape-rendering="crispEdges"><path d="M4.0 10.0h7l-3.5-4z" fill="#000"/></svg>
<div style="left:106px;top:165px;width:16px;height:9px;background:#c0c0c0;border-style:solid;border-width:1px;border-color:#dfdfdf #000 #000 #dfdfdf;box-shadow:inset 1px 1px #fff, inset -1px -1px #808080"></div>
<div style="left:106px;top:196px;width:16px;height:16px;background:#c0c0c0;border-style:solid;border-width:1px;border-color:#dfdfdf #000 #000 #dfdfdf;box-shadow:inset 1px 1px #fff, inset -1px -1px #808080"></div>
<svg style="position:absolute;left:106px;top:196px;shape-rendering:auto" width="16" height="16" viewBox="0 0 16 16" shape-rendering="crispEdges"><path d="M4.0 6.0h7l-3.5 4z" fill="#000"/></svg>
<div style="left:22px;top:212px;width:84px;height:16px;background:#dfdfdf"></div>
<div style="left:22px;top:212px;width:16px;height:16px;background:#c0c0c0;border-style:solid;border-width:1px;border-color:#dfdfdf #000 #000 #dfdfdf;box-shadow:inset 1px 1px #fff, inset -1px -1px #808080"></div>
<svg style="position:absolute;left:22px;top:212px;shape-rendering:auto" width="16" height="16" viewBox="0 0 16 16" shape-rendering="crispEdges"><path d="M9.0 4.0v7l-4-3.5z" fill="#000"/></svg>
<div style="left:46px;top:212px;width:9px;height:16px;background:#c0c0c0;border-style:solid;border-width:1px;border-color:#dfdfdf #000 #000 #dfdfdf;box-shadow:inset 1px 1px #fff, inset -1px -1px #808080"></div>
<div style="left:90px;top:212px;width:16px;height:16px;background:#c0c0c0;border-style:solid;border-width:1px;border-color:#dfdfdf #000 #000 #dfdfdf;box-shadow:inset 1px 1px #fff, inset -1px -1px #808080"></div>
<svg style="position:absolute;left:90px;top:212px;shape-rendering:auto" width="16" height="16" viewBox="0 0 16 16" shape-rendering="crispEdges"><path d="M6.0 4.0v7l4-3.5z" fill="#000"/></svg>
<div style="left:106px;top:212px;width:16px;height:16px;background:#c0c0c0"></div>
<div style="left:127px;top:126px;width:1px;height:103px;background:#808080"></div>
<div style="left:128px;top:127px;width:410px;height:102px;background:#fff;border-style:solid;border-width:1px 0 0 1px;border-color:#000"></div>
<div style="left:537px;top:126px;width:1px;height:540px;background:#dfdfdf"></div>
<div style="left:541px;top:131px;width:3px;height:18px;background:#000"></div>
<div style="left:128px;top:228px;width:410px;height:1px;background:#dfdfdf"></div>
<div style="left:21px;top:234px;width:516px;height:1px;background:#000"></div>
<div style="left:21px;top:236px;width:516px;height:1px;background:#000"></div>
<div style="left:21px;top:238px;width:516px;height:1px;background:#000"></div>
<div style="left:21px;top:240px;width:516px;height:1px;background:#000"></div>
<div style="left:21px;top:235px;width:516px;height:1px;background:#808080"></div>
<div style="left:21px;top:237px;width:516px;height:1px;background:#808080"></div>
<div style="left:21px;top:239px;width:516px;height:1px;background:#808080"></div>
<div style="left:21px;top:241px;width:516px;height:417px;background:#fff;border-left:1px solid #000"></div>
<div style="left:21px;top:658px;width:516px;height:17px;background:#dfdfdf"></div>
<div style="left:21px;top:658px;width:17px;height:17px;background:#c0c0c0;border-style:solid;border-width:1px;border-color:#dfdfdf #000 #000 #dfdfdf;box-shadow:inset 1px 1px #fff, inset -1px -1px #808080"></div>
<svg style="position:absolute;left:21px;top:658px;shape-rendering:auto" width="17" height="17" viewBox="0 0 17 17" shape-rendering="crispEdges"><path d="M9.5 4.5v7l-4-3.5z" fill="#000"/></svg>
<div style="left:38px;top:658px;width:334px;height:17px;background:#c0c0c0;border-style:solid;border-width:1px;border-color:#dfdfdf #000 #000 #dfdfdf;box-shadow:inset 1px 1px #fff, inset -1px -1px #808080"></div>
<div style="left:10px;top:676px;width:1004px;height:1px;background:#dfdfdf"></div>
<div style="left:10px;top:685px;width:1004px;height:1px;background:#808080"></div>
<div style="left:10px;top:686px;width:1004px;height:1px;background:#dfdfdf"></div>
<svg style="position:absolute;left:0px;top:0px;clip-path:inset(241px 487px 110px 22px)" width="1024" height="768" viewBox="0 0 1024 768" shape-rendering="crispEdges"><g><rect x="115" y="358" width="2" height="300" fill="#0000ff"/><rect x="117" y="358" width="2" height="300" fill="#00ff00"/><rect x="308" y="358" width="2" height="300" fill="#00ff00"/><rect x="310" y="373" width="2" height="285" fill="#0000ff"/><rect x="314" y="358" width="2" height="300" fill="#009000"/><rect x="321" y="358" width="2" height="300" fill="#00ff00"/><rect x="386" y="568" width="2" height="90" fill="#00ff00"/><rect x="386" y="645" width="2" height="13" fill="#0000ff"/><rect x="397" y="358" width="2" height="300" fill="#00ff00"/><rect x="398" y="523" width="2" height="135" fill="#0000ff"/><rect x="509" y="598" width="2" height="60" fill="#009000"/><rect x="512" y="645" width="2" height="13" fill="#0000ff"/><rect x="517" y="568" width="2" height="90" fill="#00ff00"/><rect x="532" y="598" width="2" height="60" fill="#009000"/><path d="M115 352h2v1h1v2h-1v1h-2v-1h-1v-2h1z" fill="#0000ff"/><path d="M307 354h4v1h-4zM309 352h1v5h-1z" fill="#00ff00"/><path d="M310 367h2v1h1v2h-1v1h-2v-1h-1v-2h1z" fill="#0000ff"/><path d="M313 352h1v5h-1zM316 352h1v5h-1zM314 354h2v1h-2z" fill="#009000"/><path d="M320 354h4v1h-4zM322 352h1v5h-1z" fill="#00ff00"/><path d="M385 564h4v1h-4zM387 562h1v5h-1z" fill="#00ff00"/><path d="M386 639h2v1h1v2h-1v1h-2v-1h-1v-2h1z" fill="#0000ff"/><path d="M396 354h4v1h-4zM398 352h1v5h-1z" fill="#00ff00"/><path d="M398 517h2v1h1v2h-1v1h-2v-1h-1v-2h1z" fill="#0000ff"/><path d="M508 592h1v5h-1zM511 592h1v5h-1zM509 594h2v1h-2z" fill="#009000"/><path d="M512 639h2v1h1v2h-1v1h-2v-1h-1v-2h1z" fill="#0000ff"/><path d="M516 564h4v1h-4zM518 562h1v5h-1z" fill="#00ff00"/><path d="M531 592h1v5h-1zM534 592h1v5h-1zM532 594h2v1h-2z" fill="#009000"/><rect x="320" y="416" width="4" height="1" fill="#f0f"/><rect x="396" y="416" width="4" height="1" fill="#f0f"/><rect x="385" y="607" width="4" height="1" fill="#f0f"/><rect x="516" y="607" width="4" height="1" fill="#f0f"/><path d="M114 358h4l-2-2z" fill="#f0f"/><path d="M306 357h5l-2.5-3z" fill="#f0f"/></g><path d="M22 657h1v1h-1zM23 656h1v2h-1zM24 656h1v2h-1zM25 657h1v1h-1zM26 657h1v1h-1zM27 656h1v2h-1zM28 656h1v2h-1zM29 657h1v1h-1zM30 656h1v2h-1zM31 656h1v2h-1zM32 656h1v2h-1zM33 656h1v2h-1zM34 657h1v1h-1zM35 657h1v1h-1zM36 656h1v2h-1zM37 656h1v1h-1zM38 656h1v2h-1zM39 657h1v1h-1zM40 657h1v1h-1zM41 656h1v2h-1zM42 656h1v1h-1zM43 656h1v2h-1zM44 656h1v2h-1zM45 656h1v2h-1zM46 657h1v1h-1zM47 657h1v1h-1zM48 657h1v1h-1zM49 656h1v2h-1zM50 656h1v2h-1zM51 656h1v2h-1zM52 656h1v1h-1zM53 656h1v1h-1zM54 656h1v2h-1zM55 657h1v1h-1zM56 657h1v1h-1zM57 656h1v2h-1zM58 656h1v2h-1zM59 657h1v1h-1zM60 656h1v2h-1zM61 656h1v2h-1zM62 656h1v2h-1zM63 656h1v2h-1zM64 656h1v2h-1zM65 656h1v1h-1zM66 655h1v2h-1zM67 655h1v1h-1zM68 655h1v1h-1zM69 654h1v2h-1zM70 653h1v2h-1zM71 652h1v2h-1zM72 652h1v2h-1zM73 653h1v2h-1zM74 654h1v1h-1zM75 654h1v2h-1zM76 655h1v2h-1zM77 655h1v2h-1zM78 656h1v1h-1zM79 656h1v2h-1zM80 656h1v2h-1zM81 656h1v2h-1zM82 656h1v2h-1zM83 656h1v2h-1zM84 656h1v2h-1zM85 656h1v2h-1zM86 656h1v1h-1zM87 656h1v2h-1zM88 656h1v2h-1zM89 656h1v1h-1zM90 656h1v1h-1zM91 656h1v2h-1zM92 657h1v1h-1zM93 657h1v1h-1zM94 657h1v1h-1zM95 657h1v1h-1zM96 657h1v1h-1zM97 657h1v1h-1zM98 656h1v2h-1zM99 656h1v2h-1zM100 656h1v2h-1zM101 656h1v1h-1zM102 656h1v2h-1zM103 657h1v1h-1zM104 656h1v2h-1zM105 656h1v2h-1zM106 656h1v2h-1zM107 656h1v2h-1zM108 657h1v1h-1zM109 656h1v2h-1zM110 656h1v1h-1zM111 655h1v2h-1zM112 655h1v2h-1zM113 654h1v2h-1zM114 652h1v3h-1zM115 648h1v5h-1zM116 642h1v7h-1zM117 628h1v15h-1zM118 603h1v26h-1zM119 560h1v44h-1zM120 504h1v57h-1zM121 457h1v48h-1zM122 448h1v10h-1zM123 453h1v43h-1zM124 495h1v58h-1zM125 552h1v46h-1zM126 597h1v28h-1zM127 624h1v16h-1zM128 639h1v9h-1zM129 647h1v6h-1zM130 652h1v3h-1zM131 654h1v2h-1zM132 655h1v2h-1zM133 655h1v2h-1zM134 656h1v1h-1zM135 656h1v2h-1zM136 657h1v1h-1zM137 657h1v1h-1zM138 657h1v1h-1zM139 657h1v1h-1zM140 657h1v1h-1zM141 656h1v2h-1zM142 656h1v2h-1zM143 656h1v2h-1zM144 656h1v2h-1zM145 657h1v1h-1zM146 656h1v2h-1zM147 656h1v2h-1zM148 657h1v1h-1zM149 657h1v1h-1zM150 656h1v2h-1zM151 656h1v2h-1zM152 656h1v2h-1zM153 655h1v2h-1zM154 655h1v2h-1zM155 654h1v3h-1zM156 653h1v2h-1zM157 650h1v4h-1zM158 645h1v6h-1zM159 636h1v10h-1zM160 617h1v20h-1zM161 586h1v32h-1zM162 537h1v50h-1zM163 480h1v58h-1zM164 442h1v39h-1zM165 439h1v14h-1zM166 452h1v50h-1zM167 501h1v57h-1zM168 557h1v43h-1zM169 599h1v27h-1zM170 625h1v16h-1zM171 640h1v9h-1zM172 648h1v4h-1zM173 651h1v3h-1zM174 653h1v3h-1zM175 655h1v2h-1zM176 655h1v2h-1zM177 656h1v2h-1zM178 656h1v2h-1zM179 656h1v1h-1zM180 656h1v2h-1zM181 657h1v1h-1zM182 657h1v1h-1zM183 657h1v1h-1zM184 657h1v1h-1zM185 657h1v1h-1zM186 657h1v1h-1zM187 657h1v1h-1zM188 657h1v1h-1zM189 656h1v2h-1zM190 656h1v1h-1zM191 656h1v2h-1zM192 657h1v1h-1zM193 657h1v1h-1zM194 657h1v1h-1zM195 657h1v1h-1zM196 656h1v2h-1zM197 656h1v1h-1zM198 656h1v2h-1zM199 656h1v2h-1zM200 656h1v1h-1zM201 656h1v2h-1zM202 657h1v1h-1zM203 657h1v1h-1zM204 656h1v2h-1zM205 656h1v1h-1zM206 656h1v2h-1zM207 657h1v1h-1zM208 657h1v1h-1zM209 657h1v1h-1zM210 656h1v2h-1zM211 656h1v2h-1zM212 656h1v2h-1zM213 656h1v1h-1zM214 656h1v1h-1zM215 656h1v1h-1zM216 656h1v1h-1zM217 656h1v2h-1zM218 656h1v2h-1zM219 656h1v2h-1zM220 656h1v2h-1zM221 656h1v2h-1zM222 657h1v1h-1zM223 657h1v1h-1zM224 656h1v2h-1zM225 655h1v2h-1zM226 655h1v2h-1zM227 655h1v2h-1zM228 654h1v2h-1zM229 651h1v4h-1zM230 647h1v5h-1zM231 641h1v8h-1zM232 629h1v13h-1zM233 606h1v24h-1zM234 565h1v42h-1zM235 491h1v75h-1zM236 377h1v115h-1zM237 241h1v137h-1zM241 241h1v123h-1zM242 363h1v120h-1zM243 482h1v78h-1zM244 559h1v45h-1zM245 603h1v25h-1zM246 627h1v14h-1zM247 640h1v8h-1zM248 647h1v5h-1zM249 650h1v4h-1zM250 653h1v3h-1zM251 654h1v2h-1zM252 655h1v2h-1zM253 655h1v2h-1zM254 655h1v2h-1zM255 656h1v1h-1zM256 656h1v1h-1zM257 656h1v1h-1zM258 656h1v1h-1zM259 655h1v2h-1zM260 655h1v1h-1zM261 653h1v3h-1zM262 651h1v3h-1zM263 647h1v5h-1zM264 640h1v8h-1zM265 626h1v15h-1zM266 602h1v25h-1zM267 559h1v44h-1zM268 484h1v76h-1zM269 380h1v105h-1zM270 274h1v107h-1zM271 241h1v34h-1zM272 241h1v36h-1zM273 276h1v107h-1zM274 382h1v105h-1zM275 486h1v74h-1zM276 559h1v45h-1zM277 603h1v25h-1zM278 627h1v14h-1zM279 640h1v8h-1zM280 647h1v5h-1zM281 651h1v3h-1zM282 653h1v3h-1zM283 655h1v2h-1zM284 655h1v2h-1zM285 656h1v1h-1zM286 656h1v1h-1zM287 656h1v2h-1zM288 656h1v2h-1zM289 656h1v1h-1zM290 656h1v1h-1zM291 656h1v1h-1zM292 656h1v1h-1zM293 655h1v2h-1zM294 653h1v3h-1zM295 651h1v3h-1zM296 647h1v5h-1zM297 637h1v11h-1zM298 621h1v17h-1zM299 594h1v28h-1zM300 557h1v38h-1zM301 526h1v32h-1zM302 520h1v7h-1zM303 523h1v28h-1zM304 550h1v33h-1zM305 582h1v23h-1zM306 604h1v5h-1zM307 598h1v10h-1zM308 586h1v13h-1zM309 586h1v6h-1zM310 591h1v20h-1zM311 610h1v20h-1zM312 629h1v14h-1zM313 642h1v9h-1zM314 650h1v4h-1zM315 652h1v4h-1zM316 655h1v2h-1zM317 656h1v1h-1zM318 656h1v1h-1zM319 656h1v1h-1zM320 656h1v1h-1zM321 655h1v2h-1zM322 654h1v2h-1zM323 652h1v3h-1zM324 650h1v4h-1zM325 645h1v6h-1zM326 635h1v11h-1zM327 618h1v18h-1zM328 587h1v32h-1zM329 536h1v52h-1zM330 458h1v79h-1zM331 375h1v84h-1zM332 332h1v44h-1zM333 331h1v29h-1zM334 359h1v79h-1zM335 437h1v82h-1zM336 518h1v60h-1zM337 577h1v36h-1zM338 612h1v21h-1zM339 632h1v12h-1zM340 643h1v6h-1zM341 648h1v5h-1zM342 652h1v2h-1zM343 653h1v2h-1zM344 654h1v1h-1zM345 654h1v1h-1zM346 653h1v2h-1zM347 650h1v4h-1zM348 647h1v4h-1zM349 641h1v7h-1zM350 631h1v11h-1zM351 612h1v20h-1zM352 577h1v36h-1zM353 516h1v62h-1zM354 415h1v102h-1zM355 274h1v142h-1zM356 241h1v34h-1zM359 241h1v9h-1zM360 249h1v147h-1zM361 395h1v109h-1zM362 503h1v67h-1zM363 569h1v39h-1zM364 607h1v22h-1zM365 628h1v13h-1zM366 640h1v8h-1zM367 647h1v5h-1zM368 651h1v3h-1zM369 652h1v2h-1zM370 653h1v3h-1zM371 655h1v1h-1zM372 654h1v2h-1zM373 653h1v2h-1zM374 651h1v3h-1zM375 648h1v4h-1zM376 640h1v9h-1zM377 629h1v12h-1zM378 608h1v22h-1zM379 570h1v39h-1zM380 512h1v59h-1zM381 440h1v73h-1zM382 380h1v61h-1zM383 366h1v15h-1zM384 370h1v49h-1zM385 418h1v74h-1zM386 491h1v64h-1zM387 554h1v45h-1zM388 598h1v26h-1zM389 623h1v16h-1zM390 638h1v9h-1zM391 646h1v5h-1zM392 650h1v3h-1zM393 652h1v4h-1zM394 655h1v1h-1zM395 655h1v2h-1zM396 656h1v1h-1zM397 656h1v1h-1zM398 656h1v1h-1zM399 656h1v1h-1zM400 655h1v2h-1zM401 655h1v1h-1zM402 654h1v2h-1zM403 653h1v2h-1zM404 650h1v4h-1zM405 646h1v5h-1zM406 637h1v10h-1zM407 622h1v16h-1zM408 602h1v21h-1zM409 576h1v27h-1zM410 559h1v18h-1zM411 557h1v4h-1zM412 560h1v22h-1zM413 581h1v26h-1zM414 606h1v21h-1zM415 626h1v14h-1zM416 639h1v9h-1zM417 646h1v6h-1zM418 651h1v3h-1zM419 653h1v3h-1zM420 655h1v2h-1zM421 655h1v2h-1zM422 656h1v2h-1zM423 656h1v2h-1zM424 656h1v1h-1zM425 656h1v1h-1zM426 656h1v1h-1zM427 656h1v1h-1zM428 656h1v2h-1zM429 656h1v2h-1zM430 656h1v2h-1zM431 657h1v1h-1zM432 657h1v1h-1zM433 657h1v1h-1zM434 657h1v1h-1zM435 657h1v1h-1zM436 656h1v2h-1zM437 656h1v1h-1zM438 656h1v1h-1zM439 656h1v2h-1zM440 657h1v1h-1zM441 656h1v2h-1zM442 656h1v2h-1zM443 656h1v2h-1zM444 656h1v1h-1zM445 656h1v1h-1zM446 656h1v1h-1zM447 656h1v2h-1zM448 657h1v1h-1zM449 657h1v1h-1zM450 656h1v2h-1zM451 656h1v1h-1zM452 656h1v1h-1zM453 656h1v1h-1zM454 656h1v1h-1zM455 656h1v2h-1zM456 657h1v1h-1zM457 656h1v2h-1zM458 656h1v2h-1zM459 656h1v2h-1zM460 656h1v2h-1zM461 656h1v2h-1zM462 656h1v2h-1zM463 656h1v2h-1zM464 656h1v2h-1zM465 656h1v2h-1zM466 656h1v1h-1zM467 656h1v2h-1zM468 657h1v1h-1zM469 656h1v2h-1zM470 656h1v1h-1zM471 655h1v2h-1zM472 654h1v2h-1zM473 652h1v3h-1zM474 649h1v4h-1zM475 645h1v5h-1zM476 642h1v4h-1zM477 642h1v1h-1zM478 642h1v4h-1zM479 645h1v4h-1zM480 648h1v5h-1zM481 652h1v3h-1zM482 654h1v2h-1zM483 655h1v2h-1zM484 656h1v1h-1zM485 656h1v2h-1zM486 656h1v2h-1zM487 657h1v1h-1zM488 657h1v1h-1zM489 656h1v2h-1zM490 656h1v1h-1zM491 656h1v2h-1zM492 656h1v2h-1zM493 656h1v2h-1zM494 657h1v1h-1zM495 656h1v2h-1zM496 655h1v2h-1zM497 654h1v2h-1zM498 652h1v3h-1zM499 650h1v3h-1zM500 649h1v3h-1zM501 648h1v2h-1zM502 649h1v3h-1zM503 651h1v3h-1zM504 653h1v2h-1zM505 654h1v2h-1zM506 655h1v2h-1zM507 656h1v2h-1zM508 657h1v1h-1zM509 656h1v2h-1zM510 656h1v1h-1zM511 656h1v1h-1zM512 656h1v1h-1zM513 656h1v2h-1zM514 656h1v2h-1zM515 656h1v1h-1zM516 655h1v2h-1zM517 653h1v3h-1zM518 650h1v4h-1zM519 646h1v6h-1zM520 642h1v5h-1zM521 642h1v2h-1zM522 643h1v4h-1zM523 646h1v6h-1zM524 651h1v4h-1zM525 654h1v2h-1zM526 655h1v2h-1zM527 656h1v2h-1zM528 657h1v1h-1zM529 657h1v1h-1zM530 657h1v1h-1zM531 656h1v2h-1zM532 656h1v1h-1zM533 656h1v2h-1zM534 656h1v2h-1zM535 656h1v1h-1zM536 655h1v2h-1z" fill="#000"/></svg>
<svg style="position:absolute;left:0px;top:0px;clip-path:inset(128px 487px 540px 128px)" width="1024" height="768" viewBox="0 0 1024 768" shape-rendering="crispEdges"><g><rect x="159" y="177" width="2" height="50" fill="#0000ff"/><rect x="161" y="180" width="2" height="47" fill="#00ff00"/><rect x="221" y="177" width="2" height="50" fill="#00ff00"/><rect x="222" y="181" width="2" height="46" fill="#0000ff"/><rect x="223" y="177" width="2" height="50" fill="#009000"/><rect x="225" y="177" width="2" height="50" fill="#00ff00"/><rect x="247" y="211" width="2" height="16" fill="#00ff00"/><rect x="247" y="224" width="2" height="3" fill="#0000ff"/><rect x="250" y="177" width="2" height="50" fill="#00ff00"/><rect x="250" y="205" width="2" height="22" fill="#0000ff"/><rect x="286" y="215" width="2" height="12" fill="#009000"/><rect x="287" y="224" width="2" height="3" fill="#0000ff"/><rect x="288" y="211" width="2" height="16" fill="#00ff00"/><rect x="293" y="215" width="2" height="12" fill="#009000"/><rect x="307" y="213" width="2" height="14" fill="#00ff00"/><rect x="310" y="213" width="2" height="14" fill="#00ff00"/><rect x="316" y="213" width="2" height="14" fill="#00ff00"/><rect x="322" y="213" width="2" height="14" fill="#00ff00"/><rect x="327" y="180" width="2" height="47" fill="#00e0e0"/><rect x="329" y="190" width="2" height="37" fill="#009000"/><rect x="333" y="208" width="2" height="19" fill="#009000"/><rect x="341" y="216" width="2" height="11" fill="#009000"/><rect x="343" y="203" width="2" height="24" fill="#00ff00"/><rect x="356" y="203" width="2" height="24" fill="#00ff00"/><rect x="379" y="190" width="2" height="37" fill="#00ff00"/><rect x="383" y="180" width="2" height="47" fill="#00e0e0"/><rect x="384" y="183" width="2" height="44" fill="#009000"/><rect x="388" y="190" width="2" height="37" fill="#00ff00"/><rect x="393" y="208" width="2" height="19" fill="#00ff00"/><rect x="402" y="204" width="2" height="23" fill="#00ff00"/><rect x="409" y="216" width="2" height="11" fill="#009000"/><rect x="419" y="181" width="2" height="46" fill="#00e0e0"/><rect x="421" y="188" width="2" height="39" fill="#009000"/><rect x="427" y="208" width="2" height="19" fill="#00ff00"/><rect x="427" y="216" width="2" height="11" fill="#009000"/><rect x="434" y="204" width="2" height="23" fill="#00ff00"/><rect x="441" y="204" width="2" height="23" fill="#00ff00"/><rect x="454" y="216" width="2" height="11" fill="#009000"/><rect x="463" y="193" width="2" height="34" fill="#009000"/><rect x="466" y="193" width="2" height="34" fill="#00e0e0"/><rect x="480" y="208" width="2" height="19" fill="#00ff00"/><rect x="486" y="207" width="2" height="20" fill="#009000"/><rect x="496" y="211" width="2" height="16" fill="#00ff00"/><rect x="504" y="221" width="2" height="6" fill="#00ff00"/><rect x="514" y="211" width="2" height="16" fill="#00ff00"/><rect x="524" y="197" width="2" height="30" fill="#009000"/><rect x="528" y="185" width="2" height="42" fill="#00e0e0"/><rect x="531" y="211" width="2" height="16" fill="#00ff00"/><rect x="536" y="195" width="2" height="32" fill="#00e0e0"/><path d="M159 172h2v1h1v2h-1v1h-2v-1h-1v-2h1z" fill="#0000ff"/><path d="M220 174h4v1h-4zM222 172h1v5h-1z" fill="#00ff00"/><path d="M222 176h2v1h1v2h-1v1h-2v-1h-1v-2h1z" fill="#0000ff"/><path d="M222 172h1v5h-1zM225 172h1v5h-1zM223 174h2v1h-2z" fill="#009000"/><path d="M224 174h4v1h-4zM226 172h1v5h-1z" fill="#00ff00"/><path d="M246 208h4v1h-4zM248 206h1v5h-1z" fill="#00ff00"/><rect x="246" y="213" width="4" height="1" fill="#f0f"/><path d="M247 219h2v1h1v2h-1v1h-2v-1h-1v-2h1z" fill="#0000ff"/><path d="M249 174h4v1h-4zM251 172h1v5h-1z" fill="#00ff00"/><path d="M250 200h2v1h1v2h-1v1h-2v-1h-1v-2h1z" fill="#0000ff"/><path d="M285 210h1v5h-1zM288 210h1v5h-1zM286 212h2v1h-2z" fill="#009000"/><path d="M287 219h2v1h1v2h-1v1h-2v-1h-1v-2h1z" fill="#0000ff"/><path d="M287 208h4v1h-4zM289 206h1v5h-1z" fill="#00ff00"/><rect x="287" y="213" width="4" height="1" fill="#f0f"/><path d="M292 210h1v5h-1zM295 210h1v5h-1zM293 212h2v1h-2z" fill="#009000"/><path d="M306 210h4v1h-4zM308 208h1v5h-1z" fill="#00ff00"/><rect x="306" y="215" width="4" height="1" fill="#f0f"/><path d="M309 210h4v1h-4zM311 208h1v5h-1z" fill="#00ff00"/><rect x="309" y="215" width="4" height="1" fill="#f0f"/><path d="M315 210h4v1h-4zM317 208h1v5h-1z" fill="#00ff00"/><rect x="315" y="215" width="4" height="1" fill="#f0f"/><path d="M321 210h4v1h-4zM323 208h1v5h-1z" fill="#00ff00"/><rect x="321" y="215" width="4" height="1" fill="#f0f"/><path d="M326 175h4v1h-4zM326 177h4v1h-4z" fill="#00e0e0"/><path d="M328 185h1v5h-1zM331 185h1v5h-1zM329 187h2v1h-2z" fill="#009000"/><path d="M332 203h1v5h-1zM335 203h1v5h-1zM333 205h2v1h-2z" fill="#009000"/><path d="M340 211h1v5h-1zM343 211h1v5h-1zM341 213h2v1h-2z" fill="#009000"/><path d="M342 200h4v1h-4zM344 198h1v5h-1z" fill="#00ff00"/><rect x="342" y="205" width="4" height="1" fill="#f0f"/><path d="M355 200h4v1h-4zM357 198h1v5h-1z" fill="#00ff00"/><rect x="355" y="205" width="4" height="1" fill="#f0f"/><path d="M378 187h4v1h-4zM380 185h1v5h-1z" fill="#00ff00"/><rect x="378" y="192" width="4" height="1" fill="#f0f"/><path d="M382 175h4v1h-4zM382 177h4v1h-4z" fill="#00e0e0"/><path d="M387 187h4v1h-4zM389 185h1v5h-1z" fill="#00ff00"/><rect x="387" y="192" width="4" height="1" fill="#f0f"/><path d="M392 205h4v1h-4zM394 203h1v5h-1z" fill="#00ff00"/><rect x="392" y="210" width="4" height="1" fill="#f0f"/><path d="M401 201h4v1h-4zM403 199h1v5h-1z" fill="#00ff00"/><rect x="401" y="206" width="4" height="1" fill="#f0f"/><path d="M408 211h1v5h-1zM411 211h1v5h-1zM409 213h2v1h-2z" fill="#009000"/><path d="M418 176h4v1h-4zM418 178h4v1h-4z" fill="#00e0e0"/><path d="M420 183h1v5h-1zM423 183h1v5h-1zM421 185h2v1h-2z" fill="#009000"/><path d="M426 205h4v1h-4zM428 203h1v5h-1z" fill="#00ff00"/><rect x="426" y="210" width="4" height="1" fill="#f0f"/><path d="M426 211h1v5h-1zM429 211h1v5h-1zM427 213h2v1h-2z" fill="#009000"/><path d="M433 201h4v1h-4zM435 199h1v5h-1z" fill="#00ff00"/><rect x="433" y="206" width="4" height="1" fill="#f0f"/><path d="M440 201h4v1h-4zM442 199h1v5h-1z" fill="#00ff00"/><rect x="440" y="206" width="4" height="1" fill="#f0f"/><path d="M453 211h1v5h-1zM456 211h1v5h-1zM454 213h2v1h-2z" fill="#009000"/><path d="M462 188h1v5h-1zM465 188h1v5h-1zM463 190h2v1h-2z" fill="#009000"/><path d="M465 188h4v1h-4zM465 190h4v1h-4z" fill="#00e0e0"/><path d="M479 205h4v1h-4zM481 203h1v5h-1z" fill="#00ff00"/><rect x="479" y="210" width="4" height="1" fill="#f0f"/><path d="M485 202h1v5h-1zM488 202h1v5h-1zM486 204h2v1h-2z" fill="#009000"/><path d="M495 208h4v1h-4zM497 206h1v5h-1z" fill="#00ff00"/><rect x="495" y="213" width="4" height="1" fill="#f0f"/><path d="M503 218h4v1h-4zM505 216h1v5h-1z" fill="#00ff00"/><rect x="503" y="223" width="4" height="1" fill="#f0f"/><path d="M513 208h4v1h-4zM515 206h1v5h-1z" fill="#00ff00"/><rect x="513" y="213" width="4" height="1" fill="#f0f"/><path d="M523 192h1v5h-1zM526 192h1v5h-1zM524 194h2v1h-2z" fill="#009000"/><path d="M527 180h4v1h-4zM527 182h4v1h-4z" fill="#00e0e0"/><path d="M530 208h4v1h-4zM532 206h1v5h-1z" fill="#00ff00"/><rect x="530" y="213" width="4" height="1" fill="#f0f"/><path d="M535 190h4v1h-4zM535 192h4v1h-4z" fill="#00e0e0"/><rect x="285" y="224" width="3" height="3" fill="#ff8000"/><rect x="289" y="224" width="3" height="3" fill="#ff8000"/><rect x="330" y="224" width="3" height="3" fill="#ff8000"/><rect x="336" y="224" width="3" height="3" fill="#ff8000"/><rect x="342" y="224" width="3" height="3" fill="#ff8000"/><rect x="380" y="224" width="3" height="3" fill="#ff8000"/><rect x="384" y="224" width="3" height="3" fill="#ff8000"/><rect x="418" y="224" width="3" height="3" fill="#ff8000"/><rect x="426" y="224" width="3" height="3" fill="#ff8000"/><rect x="441" y="224" width="3" height="3" fill="#ff8000"/><rect x="460" y="224" width="3" height="3" fill="#ff8000"/><rect x="482" y="224" width="3" height="3" fill="#ff8000"/><rect x="492" y="224" width="3" height="3" fill="#ff8000"/><rect x="515" y="224" width="3" height="3" fill="#ff8000"/><rect x="528" y="224" width="3" height="3" fill="#ff8000"/><rect x="536" y="224" width="3" height="3" fill="#ff8000"/></g><path d="M129 227h1v1h-1zM130 227h1v1h-1zM131 227h1v1h-1zM132 227h1v1h-1zM133 227h1v1h-1zM134 227h1v1h-1zM135 227h1v1h-1zM136 227h1v1h-1zM137 227h1v1h-1zM138 227h1v1h-1zM139 227h1v1h-1zM140 227h1v1h-1zM141 227h1v1h-1zM142 227h1v1h-1zM143 227h1v1h-1zM144 227h1v1h-1zM145 226h1v2h-1zM146 226h1v2h-1zM147 227h1v1h-1zM148 227h1v1h-1zM149 227h1v1h-1zM150 227h1v1h-1zM151 227h1v1h-1zM152 227h1v1h-1zM153 227h1v1h-1zM154 227h1v1h-1zM155 227h1v1h-1zM156 227h1v1h-1zM157 227h1v1h-1zM158 227h1v1h-1zM159 226h1v2h-1zM160 216h1v11h-1zM161 195h1v22h-1zM162 195h1v26h-1zM163 220h1v7h-1zM164 226h1v2h-1zM165 227h1v1h-1zM166 227h1v1h-1zM167 227h1v1h-1zM168 227h1v1h-1zM169 227h1v1h-1zM170 227h1v1h-1zM171 227h1v1h-1zM172 227h1v1h-1zM173 224h1v4h-1zM174 207h1v18h-1zM175 194h1v14h-1zM176 200h1v24h-1zM177 223h1v4h-1zM178 226h1v2h-1zM179 227h1v1h-1zM180 227h1v1h-1zM181 227h1v1h-1zM182 227h1v1h-1zM183 227h1v1h-1zM184 227h1v1h-1zM185 227h1v1h-1zM186 227h1v1h-1zM187 227h1v1h-1zM188 227h1v1h-1zM189 227h1v1h-1zM190 227h1v1h-1zM191 227h1v1h-1zM192 227h1v1h-1zM193 227h1v1h-1zM194 227h1v1h-1zM195 227h1v1h-1zM196 225h1v3h-1zM197 215h1v11h-1zM198 158h1v58h-1zM199 141h1v34h-1zM200 174h1v46h-1zM201 219h1v8h-1zM202 226h1v2h-1zM203 227h1v1h-1zM204 227h1v1h-1zM205 227h1v1h-1zM206 226h1v2h-1zM207 223h1v4h-1zM208 197h1v27h-1zM209 161h1v37h-1zM210 165h1v49h-1zM211 213h1v13h-1zM212 225h1v3h-1zM213 227h1v1h-1zM214 227h1v1h-1zM215 227h1v1h-1zM216 227h1v1h-1zM217 225h1v3h-1zM218 215h1v11h-1zM219 206h1v10h-1zM220 210h1v12h-1zM221 216h1v6h-1zM222 217h1v10h-1zM223 226h1v2h-1zM224 227h1v1h-1zM225 227h1v1h-1zM226 226h1v2h-1zM227 220h1v7h-1zM228 187h1v34h-1zM229 177h1v20h-1zM230 196h1v27h-1zM231 222h1v5h-1zM232 226h1v2h-1zM233 227h1v1h-1zM234 225h1v3h-1zM235 213h1v13h-1zM236 152h1v62h-1zM237 135h1v34h-1zM238 168h1v51h-1zM239 218h1v9h-1zM240 226h1v2h-1zM241 227h1v1h-1zM242 226h1v2h-1zM243 222h1v5h-1zM244 198h1v25h-1zM245 182h1v17h-1zM246 191h1v30h-1zM247 220h1v7h-1zM248 226h1v2h-1zM249 227h1v1h-1zM250 227h1v1h-1zM251 227h1v1h-1zM252 225h1v3h-1zM253 216h1v10h-1zM254 212h1v5h-1zM255 216h1v10h-1zM256 225h1v3h-1zM257 227h1v1h-1zM258 227h1v1h-1zM259 227h1v1h-1zM260 227h1v1h-1zM261 227h1v1h-1zM262 227h1v1h-1zM263 227h1v1h-1zM264 227h1v1h-1zM265 227h1v1h-1zM266 227h1v1h-1zM267 227h1v1h-1zM268 227h1v1h-1zM269 227h1v1h-1zM270 227h1v1h-1zM271 227h1v1h-1zM272 227h1v1h-1zM273 227h1v1h-1zM274 226h1v2h-1zM275 225h1v2h-1zM276 225h1v3h-1zM277 227h1v1h-1zM278 227h1v1h-1zM279 227h1v1h-1zM280 227h1v1h-1zM281 227h1v1h-1zM282 226h1v2h-1zM283 226h1v1h-1zM284 226h1v2h-1zM285 227h1v1h-1zM286 227h1v1h-1zM287 227h1v1h-1zM288 226h1v2h-1zM289 225h1v2h-1zM290 225h1v3h-1zM291 227h1v1h-1zM292 227h1v1h-1zM293 227h1v1h-1zM294 227h1v1h-1zM295 226h1v2h-1zM296 224h1v3h-1zM297 224h1v3h-1zM298 226h1v1h-1zM299 225h1v2h-1zM300 225h1v2h-1zM301 226h1v2h-1zM302 227h1v1h-1zM303 227h1v1h-1zM304 227h1v1h-1zM305 227h1v1h-1zM306 226h1v2h-1zM307 222h1v5h-1zM308 219h1v4h-1zM309 219h1v7h-1zM310 225h1v3h-1zM311 227h1v1h-1zM312 227h1v1h-1zM313 224h1v4h-1zM314 221h1v4h-1zM315 222h1v5h-1zM316 226h1v2h-1zM317 227h1v1h-1zM318 227h1v1h-1zM319 224h1v4h-1zM320 222h1v3h-1zM321 223h1v4h-1zM322 226h1v2h-1zM323 227h1v1h-1zM324 226h1v2h-1zM325 225h1v2h-1zM326 225h1v2h-1zM327 226h1v2h-1zM328 227h1v1h-1zM329 227h1v1h-1zM330 227h1v1h-1zM331 227h1v1h-1zM332 226h1v2h-1zM333 223h1v4h-1zM334 218h1v6h-1zM335 219h1v7h-1zM336 223h1v3h-1zM337 211h1v13h-1zM338 209h1v9h-1zM339 217h1v9h-1zM340 225h1v3h-1zM341 225h1v3h-1zM342 219h1v7h-1zM343 219h1v5h-1zM344 223h1v4h-1zM345 226h1v2h-1zM346 227h1v1h-1zM347 225h1v3h-1zM348 217h1v9h-1zM349 214h1v4h-1zM350 217h1v9h-1zM351 225h1v2h-1zM352 224h1v3h-1zM353 211h1v14h-1zM354 205h1v7h-1zM355 211h1v14h-1zM356 224h1v4h-1zM357 227h1v1h-1zM358 227h1v1h-1zM359 227h1v1h-1zM360 226h1v2h-1zM361 225h1v2h-1zM362 225h1v2h-1zM363 226h1v2h-1zM364 227h1v1h-1zM365 227h1v1h-1zM366 227h1v1h-1zM367 227h1v1h-1zM368 227h1v1h-1zM369 226h1v2h-1zM370 225h1v2h-1zM371 224h1v2h-1zM372 225h1v3h-1zM373 226h1v2h-1zM374 220h1v7h-1zM375 218h1v3h-1zM376 220h1v7h-1zM377 226h1v2h-1zM378 226h1v2h-1zM379 218h1v9h-1zM380 204h1v15h-1zM381 204h1v18h-1zM382 221h1v6h-1zM383 226h1v1h-1zM384 218h1v9h-1zM385 194h1v25h-1zM386 193h1v22h-1zM387 214h1v12h-1zM388 225h1v2h-1zM389 222h1v5h-1zM390 213h1v10h-1zM391 213h1v10h-1zM392 222h1v5h-1zM393 226h1v1h-1zM394 222h1v5h-1zM395 204h1v19h-1zM396 202h1v12h-1zM397 213h1v13h-1zM398 225h1v3h-1zM399 227h1v1h-1zM400 227h1v1h-1zM401 227h1v1h-1zM402 226h1v2h-1zM403 220h1v7h-1zM404 205h1v16h-1zM405 205h1v16h-1zM406 220h1v7h-1zM407 226h1v2h-1zM408 227h1v1h-1zM409 227h1v1h-1zM410 227h1v1h-1zM411 226h1v2h-1zM412 223h1v4h-1zM413 208h1v16h-1zM414 205h1v11h-1zM415 215h1v11h-1zM416 225h1v3h-1zM417 227h1v1h-1zM418 227h1v1h-1zM419 227h1v1h-1zM420 227h1v1h-1zM421 227h1v1h-1zM422 227h1v1h-1zM423 227h1v1h-1zM424 227h1v1h-1zM425 227h1v1h-1zM426 225h1v3h-1zM427 219h1v7h-1zM428 219h1v4h-1zM429 222h1v5h-1zM430 226h1v2h-1zM431 227h1v1h-1zM432 224h1v4h-1zM433 217h1v8h-1zM434 217h1v8h-1zM435 224h1v4h-1zM436 227h1v1h-1zM437 227h1v1h-1zM438 226h1v2h-1zM439 225h1v2h-1zM440 225h1v2h-1zM441 226h1v2h-1zM442 227h1v1h-1zM443 227h1v1h-1zM444 227h1v1h-1zM445 227h1v1h-1zM446 227h1v1h-1zM447 227h1v1h-1zM448 225h1v3h-1zM449 224h1v2h-1zM450 225h1v3h-1zM451 227h1v1h-1zM452 227h1v1h-1zM453 227h1v1h-1zM454 227h1v1h-1zM455 227h1v1h-1zM456 225h1v3h-1zM457 222h1v4h-1zM458 222h1v5h-1zM459 226h1v2h-1zM460 227h1v1h-1zM461 227h1v1h-1zM462 227h1v1h-1zM463 226h1v2h-1zM464 225h1v2h-1zM465 225h1v2h-1zM466 226h1v2h-1zM467 227h1v1h-1zM468 227h1v1h-1zM469 227h1v1h-1zM470 227h1v1h-1zM471 226h1v2h-1zM472 224h1v3h-1zM473 223h1v3h-1zM474 225h1v3h-1zM475 227h1v1h-1zM476 227h1v1h-1zM477 227h1v1h-1zM478 227h1v1h-1zM479 227h1v1h-1zM480 227h1v1h-1zM481 227h1v1h-1zM482 227h1v1h-1zM483 227h1v1h-1zM484 227h1v1h-1zM485 226h1v2h-1zM486 224h1v3h-1zM487 223h1v3h-1zM488 225h1v3h-1zM489 227h1v1h-1zM490 227h1v1h-1zM491 227h1v1h-1zM492 227h1v1h-1zM493 227h1v1h-1zM494 227h1v1h-1zM495 227h1v1h-1zM496 226h1v2h-1zM497 225h1v2h-1zM498 225h1v2h-1zM499 226h1v2h-1zM500 227h1v1h-1zM501 227h1v1h-1zM502 227h1v1h-1zM503 227h1v1h-1zM504 227h1v1h-1zM505 225h1v3h-1zM506 221h1v5h-1zM507 221h1v5h-1zM508 225h1v3h-1zM509 227h1v1h-1zM510 227h1v1h-1zM511 227h1v1h-1zM512 227h1v1h-1zM513 227h1v1h-1zM514 227h1v1h-1zM515 227h1v1h-1zM516 226h1v2h-1zM517 222h1v5h-1zM518 221h1v3h-1zM519 223h1v4h-1zM520 226h1v2h-1zM521 227h1v1h-1zM522 227h1v1h-1zM523 227h1v1h-1zM524 227h1v1h-1zM525 226h1v2h-1zM526 222h1v5h-1zM527 220h1v3h-1zM528 222h1v5h-1zM529 226h1v2h-1zM530 227h1v1h-1zM531 227h1v1h-1zM532 227h1v1h-1zM533 225h1v3h-1zM534 220h1v6h-1zM535 220h1v5h-1zM536 224h1v3h-1z" fill="#000"/><path d="M130 160h1v1h-1zM131 159h1v1h-1zM132 158h1v1h-1zM134 160h1v1h-1zM135 159h1v1h-1zM136 158h1v1h-1zM138 160h1v1h-1zM139 159h1v1h-1zM140 158h1v1h-1zM142 160h1v1h-1zM143 159h1v1h-1zM144 158h1v1h-1zM146 160h1v1h-1zM147 159h1v1h-1zM148 158h1v1h-1zM150 160h1v1h-1zM151 159h1v1h-1zM152 158h1v1h-1zM154 160h1v1h-1zM155 159h1v1h-1zM156 158h1v1h-1zM158 160h1v1h-1zM159 159h1v1h-1zM160 158h1v1h-1zM162 160h1v1h-1zM163 159h1v1h-1zM164 158h1v1h-1zM166 160h1v1h-1zM167 159h1v1h-1zM168 158h1v1h-1zM170 160h1v1h-1zM171 159h1v1h-1zM172 158h1v1h-1zM174 160h1v1h-1zM175 159h1v1h-1zM176 158h1v1h-1zM178 160h1v1h-1zM179 159h1v1h-1zM180 158h1v1h-1zM182 160h1v1h-1zM183 159h1v1h-1zM184 158h1v1h-1zM186 160h1v1h-1zM187 159h1v1h-1zM188 158h1v1h-1zM190 160h1v1h-1zM191 159h1v1h-1zM192 158h1v1h-1zM194 160h1v1h-1zM195 159h1v1h-1zM196 158h1v1h-1zM198 160h1v1h-1zM199 159h1v1h-1zM200 158h1v1h-1zM202 160h1v1h-1zM203 159h1v1h-1zM204 158h1v1h-1zM206 160h1v1h-1zM207 159h1v1h-1zM208 158h1v1h-1zM210 160h1v1h-1zM211 159h1v1h-1zM212 158h1v1h-1zM214 160h1v1h-1zM215 159h1v1h-1zM216 158h1v1h-1zM218 160h1v1h-1zM219 159h1v1h-1zM220 158h1v1h-1zM222 160h1v1h-1zM223 159h1v1h-1zM224 158h1v1h-1zM226 160h1v1h-1zM227 159h1v1h-1zM228 158h1v1h-1zM230 160h1v1h-1zM231 159h1v1h-1zM232 158h1v1h-1zM234 160h1v1h-1zM235 159h1v1h-1zM236 158h1v1h-1zM238 160h1v1h-1zM239 159h1v1h-1zM240 158h1v1h-1zM242 160h1v1h-1zM243 159h1v1h-1zM244 158h1v1h-1zM246 160h1v1h-1zM247 159h1v1h-1zM248 158h1v1h-1zM250 160h1v1h-1zM251 159h1v1h-1zM252 158h1v1h-1zM254 160h1v1h-1zM255 159h1v1h-1zM256 158h1v1h-1zM258 160h1v1h-1zM259 159h1v1h-1zM260 158h1v1h-1zM262 160h1v1h-1zM263 159h1v1h-1zM264 158h1v1h-1zM266 160h1v1h-1zM267 159h1v1h-1zM268 158h1v1h-1zM270 160h1v1h-1zM271 159h1v1h-1zM272 158h1v1h-1zM274 160h1v1h-1zM275 159h1v1h-1zM276 158h1v1h-1zM278 160h1v1h-1zM279 159h1v1h-1zM280 158h1v1h-1zM282 160h1v1h-1zM283 159h1v1h-1zM284 158h1v1h-1zM286 160h1v1h-1zM287 159h1v1h-1zM288 158h1v1h-1zM290 160h1v1h-1zM291 159h1v1h-1zM292 158h1v1h-1zM294 160h1v1h-1zM295 159h1v1h-1zM296 158h1v1h-1zM298 160h1v1h-1zM299 159h1v1h-1zM300 158h1v1h-1zM302 160h1v1h-1zM303 159h1v1h-1zM304 158h1v1h-1zM306 160h1v1h-1zM307 159h1v1h-1zM308 158h1v1h-1zM310 160h1v1h-1zM311 159h1v1h-1zM312 158h1v1h-1zM314 160h1v1h-1zM315 159h1v1h-1zM316 158h1v1h-1zM318 160h1v1h-1zM319 159h1v1h-1zM320 158h1v1h-1zM322 160h1v1h-1zM323 159h1v1h-1zM324 158h1v1h-1zM326 160h1v1h-1zM327 159h1v1h-1zM328 158h1v1h-1zM330 160h1v1h-1zM331 159h1v1h-1zM332 158h1v1h-1zM334 160h1v1h-1zM335 159h1v1h-1zM336 158h1v1h-1zM338 160h1v1h-1zM339 159h1v1h-1zM340 158h1v1h-1zM342 160h1v1h-1zM343 159h1v1h-1zM344 158h1v1h-1zM346 160h1v1h-1zM347 159h1v1h-1zM348 158h1v1h-1zM350 160h1v1h-1zM351 159h1v1h-1zM352 158h1v1h-1zM354 160h1v1h-1zM355 159h1v1h-1zM356 158h1v1h-1zM358 160h1v1h-1zM359 159h1v1h-1zM360 158h1v1h-1zM362 160h1v1h-1zM363 159h1v1h-1zM364 158h1v1h-1zM366 160h1v1h-1zM367 159h1v1h-1zM368 158h1v1h-1zM370 160h1v1h-1zM371 159h1v1h-1zM372 158h1v1h-1zM374 160h1v1h-1zM375 159h1v1h-1zM376 158h1v1h-1zM378 160h1v1h-1zM379 159h1v1h-1zM380 158h1v1h-1zM382 160h1v1h-1zM383 159h1v1h-1zM384 158h1v1h-1zM386 160h1v1h-1zM387 159h1v1h-1zM388 158h1v1h-1zM390 160h1v1h-1zM391 159h1v1h-1zM392 158h1v1h-1zM394 160h1v1h-1zM395 159h1v1h-1zM396 158h1v1h-1zM398 160h1v1h-1zM399 159h1v1h-1zM400 158h1v1h-1zM402 160h1v1h-1zM403 159h1v1h-1zM404 158h1v1h-1zM406 160h1v1h-1zM407 159h1v1h-1zM408 158h1v1h-1zM410 160h1v1h-1zM411 159h1v1h-1zM412 158h1v1h-1zM414 160h1v1h-1zM415 159h1v1h-1zM416 158h1v1h-1zM418 160h1v1h-1zM419 159h1v1h-1zM420 158h1v1h-1zM422 160h1v1h-1zM423 159h1v1h-1zM424 158h1v1h-1zM426 160h1v1h-1zM427 159h1v1h-1zM428 158h1v1h-1zM430 160h1v1h-1zM431 159h1v1h-1zM432 158h1v1h-1zM434 160h1v1h-1zM435 159h1v1h-1zM436 158h1v1h-1zM438 160h1v1h-1zM439 159h1v1h-1zM440 158h1v1h-1zM442 160h1v1h-1zM443 159h1v1h-1zM444 158h1v1h-1zM446 160h1v1h-1zM447 159h1v1h-1zM448 158h1v1h-1zM443 164h1v1h-1zM444 163h1v1h-1zM445 162h1v1h-1zM443 168h1v1h-1zM444 167h1v1h-1zM445 166h1v1h-1zM443 172h1v1h-1zM444 171h1v1h-1zM445 170h1v1h-1zM443 176h1v1h-1zM444 175h1v1h-1zM445 174h1v1h-1zM443 180h1v1h-1zM444 179h1v1h-1zM445 178h1v1h-1zM443 184h1v1h-1zM444 183h1v1h-1zM445 182h1v1h-1zM443 188h1v1h-1zM444 187h1v1h-1zM445 186h1v1h-1zM443 192h1v1h-1zM444 191h1v1h-1zM445 190h1v1h-1zM443 196h1v1h-1zM444 195h1v1h-1zM445 194h1v1h-1zM443 200h1v1h-1zM444 199h1v1h-1zM445 198h1v1h-1zM443 204h1v1h-1zM444 203h1v1h-1zM445 202h1v1h-1zM443 208h1v1h-1zM444 207h1v1h-1zM445 206h1v1h-1zM443 212h1v1h-1zM444 211h1v1h-1zM445 210h1v1h-1zM443 216h1v1h-1zM444 215h1v1h-1zM445 214h1v1h-1zM443 220h1v1h-1zM444 219h1v1h-1zM445 218h1v1h-1zM443 224h1v1h-1zM444 223h1v1h-1zM445 222h1v1h-1z" fill="#000"/><rect x="128" y="161" width="315" height="1" fill="#000"/><rect x="442" y="161" width="1" height="67" fill="#000"/><rect x="128" y="161" width="4" height="4" fill="#000"/><rect x="283" y="161" width="4" height="4" fill="#000"/><rect x="439" y="161" width="4" height="4" fill="#000"/><rect x="128" y="193" width="4" height="4" fill="#000"/><rect x="439" y="193" width="4" height="4" fill="#000"/><rect x="128" y="224" width="4" height="4" fill="#000"/><rect x="283" y="224" width="4" height="4" fill="#000"/><rect x="439" y="224" width="4" height="4" fill="#000"/></svg>
<div style="left:537px;top:666px;width:459px;height:9px;background:#dfdfdf"></div>
<div style="left:980px;top:658px;width:16px;height:17px;background:#c0c0c0;border-style:solid;border-width:1px;border-color:#dfdfdf #000 #000 #dfdfdf;box-shadow:inset 1px 1px #fff, inset -1px -1px #808080"></div>
<svg style="position:absolute;left:980px;top:658px;shape-rendering:auto" width="16" height="17" viewBox="0 0 16 17" shape-rendering="crispEdges"><path d="M6.0 4.5v7l4-3.5z" fill="#000"/></svg>
<div style="left:537px;top:665px;width:487px;height:1px;background:#000"></div>
<div style="left:1013px;top:666px;width:1px;height:11px;background:#dfdfdf"></div>
<div style="left:1015px;top:666px;width:1px;height:22px;background:#fff"></div>
<div style="left:1019px;top:666px;width:1px;height:27px;background:#000"></div>
<div style="left:544px;top:53px;width:480px;height:613px;background:#c0c0c0"></div>
<div style="left:545px;top:53px;width:478px;height:1px;background:#dfdfdf"></div>
<div style="left:545px;top:53px;width:1px;height:365px;background:#dfdfdf"></div>
<div style="left:537px;top:665px;width:487px;height:1px;background:#000"></div>
<div style="left:538px;top:664px;width:485px;height:1px;background:#808080"></div>
<div style="left:1023px;top:53px;width:1px;height:612px;background:#808080"></div>
<div style="left:548px;top:56px;width:476px;height:18px;background:#000"></div>
<div class="t" style="left:550px;top:57.90px;font-size:14.3px;color:#ff0;font-weight:400;">ToolBox</div>
<div style="left:1011px;top:58px;width:13px;height:13px;background:#c0c0c0;border-style:solid;border-width:1px;border-color:#fff #000 #000 #fff;box-shadow:inset -1px -1px #808080;"></div>
<svg style="position:absolute;left:1011px;top:58px;shape-rendering:auto" width="13" height="13" viewBox="0 0 13 13" shape-rendering="crispEdges"><path d="M3 3l7 6M10 3l-7 6" stroke="#000" stroke-width="1.6"/></svg>
<div style="left:556px;top:81px;width:90px;height:25px;background:#c0c0c0;border-style:solid;border-width:1px;border-color:#fff #000 #000 #fff;box-shadow:inset -1px -1px #808080, inset 1px 1px #dfdfdf"></div>
<div class="t" style="left:556.00px;width:90px;text-align:center;top:86.50px;font-size:13px;color:#000;font-weight:400;">Scan</div>
<div style="left:648px;top:81px;width:90px;height:25px;background:#dfdfdf;border-style:solid;border-width:1px;border-color:#000 #fff #fff #000;box-shadow:inset 1px 1px #c8c8c8"></div>
<div class="t" style="left:648.00px;width:90px;text-align:center;top:86.50px;font-size:13px;color:#000;font-weight:400;">Pattern</div>
<div style="left:740px;top:81px;width:90px;height:25px;background:#c0c0c0;border-style:solid;border-width:1px;border-color:#fff #000 #000 #fff;box-shadow:inset -1px -1px #808080, inset 1px 1px #dfdfdf"></div>
<div class="t" style="left:740.00px;width:90px;text-align:center;top:86.50px;font-size:13px;color:#000;font-weight:400;">Peak</div>
<div style="left:832px;top:81px;width:90px;height:25px;background:#c0c0c0;border-style:solid;border-width:1px;border-color:#fff #000 #000 #fff;box-shadow:inset -1px -1px #808080, inset 1px 1px #dfdfdf"></div>
<div class="t" style="left:832.00px;width:90px;text-align:center;top:86.50px;font-size:13px;color:#000;font-weight:400;">Area</div>
<div style="left:924px;top:81px;width:90px;height:25px;background:#c0c0c0;border-style:solid;border-width:1px;border-color:#fff #000 #000 #fff;box-shadow:inset -1px -1px #808080, inset 1px 1px #dfdfdf"></div>
<div class="t" style="left:924.00px;width:90px;text-align:center;top:86.50px;font-size:13px;color:#000;font-weight:400;">Label</div>
<div style="left:560px;top:114px;width:28px;height:26px;background:#dfdfdf;border-style:solid;border-width:1px;border-color:#000 #fff #fff #000;box-shadow:inset 1px 1px #c8c8c8"></div>
<svg style="position:absolute;left:560px;top:114px;shape-rendering:auto" width="28" height="26" viewBox="0 0 28 26" shape-rendering="crispEdges"></svg>
<div style="left:588px;top:114px;width:28px;height:26px;background:#c0c0c0;border-style:solid;border-width:1px;border-color:#fff #000 #000 #fff;box-shadow:inset -1px -1px #808080, inset 1px 1px #dfdfdf"></div>
<svg style="position:absolute;left:588px;top:114px;shape-rendering:auto" width="28" height="26" viewBox="0 0 28 26" shape-rendering="crispEdges"></svg>
<div style="left:616px;top:114px;width:28px;height:26px;background:#c0c0c0;border-style:solid;border-width:1px;border-color:#fff #000 #000 #fff;box-shadow:inset -1px -1px #808080, inset 1px 1px #dfdfdf"></div>
<svg style="position:absolute;left:616px;top:114px;shape-rendering:auto" width="28" height="26" viewBox="0 0 28 26" shape-rendering="crispEdges"></svg>
<div style="left:644px;top:114px;width:28px;height:26px;background:#c0c0c0;border-style:solid;border-width:1px;border-color:#fff #000 #000 #fff;box-shadow:inset -1px -1px #808080, inset 1px 1px #dfdfdf"></div>
<svg style="position:absolute;left:644px;top:114px;shape-rendering:auto" width="28" height="26" viewBox="0 0 28 26" shape-rendering="crispEdges"></svg>
<div style="left:688px;top:114px;width:28px;height:26px;background:#c0c0c0;border-style:solid;border-width:1px;border-color:#fff #000 #000 #fff;box-shadow:inset -1px -1px #808080, inset 1px 1px #dfdfdf"></div>
<svg style="position:absolute;left:688px;top:114px;shape-rendering:auto" width="28" height="26" viewBox="0 0 28 26" shape-rendering="crispEdges"></svg>
<div style="left:716px;top:114px;width:28px;height:26px;background:#c0c0c0;border-style:solid;border-width:1px;border-color:#fff #000 #000 #fff;box-shadow:inset -1px -1px #808080, inset 1px 1px #dfdfdf"></div>
<svg style="position:absolute;left:716px;top:114px;shape-rendering:auto" width="28" height="26" viewBox="0 0 28 26" shape-rendering="crispEdges"></svg>
<svg style="position:absolute;left:744px;top:114px;shape-rendering:auto" width="28" height="26" viewBox="0 0 28 26" shape-rendering="crispEdges"></svg>
<div style="left:772px;top:114px;width:28px;height:26px;background:#c0c0c0;border-style:solid;border-width:1px;border-color:#fff #000 #000 #fff;box-shadow:inset -1px -1px #808080, inset 1px 1px #dfdfdf"></div>
<svg style="position:absolute;left:772px;top:114px;shape-rendering:auto" width="28" height="26" viewBox="0 0 28 26" shape-rendering="crispEdges"></svg>
<div style="left:800px;top:114px;width:28px;height:26px;background:#c0c0c0;border-style:solid;border-width:1px;border-color:#fff #000 #000 #fff;box-shadow:inset -1px -1px #808080, inset 1px 1px #dfdfdf"></div>
<svg style="position:absolute;left:800px;top:114px;shape-rendering:auto" width="28" height="26" viewBox="0 0 28 26" shape-rendering="crispEdges"></svg>
<div style="left:844px;top:114px;width:28px;height:26px;background:#c0c0c0;border-style:solid;border-width:1px;border-color:#fff #000 #000 #fff;box-shadow:inset -1px -1px #808080, inset 1px 1px #dfdfdf"></div>
<svg style="position:absolute;left:844px;top:114px;shape-rendering:auto" width="28" height="26" viewBox="0 0 28 26" shape-rendering="crispEdges"><rect x="5.5" y="6.5" width="3" height="3" fill="none" stroke="#000"/><rect x="5.5" y="11.5" width="3" height="3" fill="none" stroke="#000"/><rect x="5.5" y="16.5" width="3" height="3" fill="none" stroke="#00f"/><rect x="13" y="10" width="9" height="9" fill="#808080"/><rect x="11" y="8" width="9" height="9" fill="#fff"/><path d="M12.5 12l2 2.5 4-5" fill="none" stroke="#000" stroke-width="2"/></svg>
<div style="left:872px;top:114px;width:28px;height:26px;background:#c0c0c0;border-style:solid;border-width:1px;border-color:#fff #000 #000 #fff;box-shadow:inset -1px -1px #808080, inset 1px 1px #dfdfdf"></div>
<svg style="position:absolute;left:872px;top:114px;shape-rendering:auto" width="28" height="26" viewBox="0 0 28 26" shape-rendering="crispEdges"><rect x="5.5" y="6.5" width="3" height="3" fill="none" stroke="#000"/><rect x="5.5" y="11.5" width="3" height="3" fill="none" stroke="#000"/><rect x="5.5" y="16.5" width="3" height="3" fill="none" stroke="#00f"/><rect x="13" y="10" width="9" height="9" fill="#808080"/><rect x="11" y="8" width="9" height="9" fill="#fff"/></svg>
<div style="left:900px;top:114px;width:28px;height:26px;background:#c0c0c0;border-style:solid;border-width:1px;border-color:#fff #000 #000 #fff;box-shadow:inset -1px -1px #808080, inset 1px 1px #dfdfdf"></div>
<svg style="position:absolute;left:900px;top:114px;shape-rendering:auto" width="28" height="26" viewBox="0 0 28 26" shape-rendering="crispEdges"><path d="M8 9q4-5 10-2q4 3 3 8q-1 4-5 5q-6 1-8-4q-1-4 0-7z" fill="#ff0" stroke="#000"/><circle cx="12" cy="10" r="1.5" fill="#f0f"/><circle cx="15" cy="9" r="1.3" fill="#0f0"/><circle cx="11" cy="14" r="1.5" fill="#f00"/><circle cx="17" cy="13" r="1.3" fill="#0ff"/><circle cx="14" cy="17" r="1.5" fill="#00f"/></svg>
<div style="left:928px;top:114px;width:28px;height:26px;background:#c0c0c0;border-style:solid;border-width:1px;border-color:#fff #000 #000 #fff;box-shadow:inset -1px -1px #808080, inset 1px 1px #dfdfdf"></div>
<svg style="position:absolute;left:928px;top:114px;shape-rendering:auto" width="28" height="26" viewBox="0 0 28 26" shape-rendering="crispEdges"><rect x="9.5" y="5.5" width="13" height="13" fill="#fff" stroke="#000"/><rect x="10" y="6" width="12" height="2" fill="#000"/><rect x="15" y="11" width="7" height="2" fill="#00f"/><path d="M15 6v12" stroke="#000"/><text x="4" y="20" font-size="12" font-weight="700" fill="#ff0" stroke="#000" stroke-width=".6" font-family="Liberation Sans">?</text></svg>
<div style="left:956px;top:114px;width:28px;height:26px;background:#c0c0c0;border-style:solid;border-width:1px;border-color:#fff #000 #000 #fff;box-shadow:inset -1px -1px #808080, inset 1px 1px #dfdfdf"></div>
<svg style="position:absolute;left:956px;top:114px;shape-rendering:auto" width="28" height="26" viewBox="0 0 28 26" shape-rendering="crispEdges"><path d="M5 15h14l2 3h-16z" fill="#808080" stroke="#000" stroke-width=".8"/><circle cx="17" cy="11" r="5" fill="#c0c0c0" stroke="#000" stroke-width=".8"/><circle cx="17" cy="11" r="1.5" fill="#fff"/><path d="M14 9l2 1" stroke="#0f0" stroke-width="1.5"/><path d="M18 13l2 1" stroke="#f0f" stroke-width="1.2"/></svg>
<div style="left:984px;top:114px;width:28px;height:26px;background:#c0c0c0;border-style:solid;border-width:1px;border-color:#fff #000 #000 #fff;box-shadow:inset -1px -1px #808080, inset 1px 1px #dfdfdf"></div>
<svg style="position:absolute;left:984px;top:114px;shape-rendering:auto" width="28" height="26" viewBox="0 0 28 26" shape-rendering="crispEdges"><rect x="8.5" y="5.5" width="14" height="13" fill="#fff" stroke="#000"/><rect x="9" y="6" width="13" height="2" fill="#000080"/><rect x="10" y="6" width="4" height="1" fill="#f00"/><rect x="17" y="6" width="4" height="1" fill="#f00"/><path d="M15.5 8v10" stroke="#000"/><path d="M7 18l3-5M15 18l3-5" stroke="#000"/><circle cx="8" cy="19" r="1.8" fill="#0ff" stroke="#000" stroke-width=".6"/><circle cx="14" cy="19" r="1.8" fill="#0ff" stroke="#000" stroke-width=".6"/></svg>
<div style="left:558px;top:146px;width:456px;height:244px;background:#fff;border-style:solid;border-width:1px;border-color:#808080 #dfdfdf #dfdfdf #808080;box-shadow:inset 1px 1px #000, inset -1px -1px #c0c0c0"></div>
<div style="left:560px;top:148px;width:48px;height:20px;background:#c0c0c0;border-style:solid;border-width:1px;border-color:#fff #000 #000 #fff;box-shadow:inset -1px -1px #808080"></div>
<div style="left:608px;top:148px;width:78px;height:20px;background:#c0c0c0;border-style:solid;border-width:1px;border-color:#fff #000 #000 #fff;box-shadow:inset -1px -1px #808080"></div>
<div class="t" style="left:613px;top:152.00px;font-size:13px;color:#000;font-weight:400;">SS-NNNN</div>
<div style="left:686px;top:148px;width:123px;height:20px;background:#c0c0c0;border-style:solid;border-width:1px;border-color:#fff #000 #000 #fff;box-shadow:inset -1px -1px #808080"></div>
<div class="t" style="left:691px;top:152.00px;font-size:13px;color:#000;font-weight:400;">Compound Name</div>
<div style="left:809px;top:148px;width:65px;height:20px;background:#c0c0c0;border-style:solid;border-width:1px;border-color:#fff #000 #000 #fff;box-shadow:inset -1px -1px #808080"></div>
<div class="t" style="left:814px;top:152.00px;font-size:13px;color:#000;font-weight:400;">Formula</div>
<div style="left:874px;top:148px;width:63px;height:20px;background:#c0c0c0;border-style:solid;border-width:1px;border-color:#fff #000 #000 #fff;box-shadow:inset -1px -1px #808080"></div>
<div class="t" style="left:879px;top:152.00px;font-size:13px;color:#000;font-weight:400;">Y-Scale</div>
<div style="left:937px;top:148px;width:51px;height:20px;background:#c0c0c0;border-style:solid;border-width:1px;border-color:#fff #000 #000 #fff;box-shadow:inset -1px -1px #808080"></div>
<div class="t" style="left:942px;top:152.00px;font-size:13px;color:#000;font-weight:400;">d x by</div>
<div style="left:988px;top:148px;width:24px;height:20px;background:#c0c0c0;border-style:solid;border-width:1px;border-color:#fff #000 #000 #fff;box-shadow:inset -1px -1px #808080"></div>
<div class="t" style="left:993px;top:152.00px;font-size:13px;color:#000;font-weight:400;">Y</div>
<div style="left:563px;top:171px;width:11px;height:11px;background:#0ff;border:1px solid #808080"></div>
<svg style="position:absolute;left:578px;top:169px;shape-rendering:auto" width="17" height="15" viewBox="0 0 17 15" shape-rendering="crispEdges"><ellipse cx="9.2" cy="7.5" rx="6" ry="5.6" fill="#808080"/><ellipse cx="7.7" cy="6" rx="6" ry="5.6" fill="#ff0" stroke="#808000" stroke-width=".6"/><path d="M5.5 3.5h5M5.5 9.5h5M8 3.5v6" stroke="#00f" stroke-width="1.4"/></svg>
<div class="t" style="left:599px;top:170.00px;font-size:13px;color:#000;font-weight:400;letter-spacing:-0.4px">43-0435</div>
<div class="t" style="left:676px;top:170.00px;font-size:13px;color:#000;font-weight:400;">Aluminum Fluoride</div>
<div class="t" style="left:798px;top:170.00px;font-size:13px;color:#000;font-weight:400;">AlF3</div>
<div class="t" style="left:863px;top:170.00px;font-size:13px;color:#000;font-weight:400;letter-spacing:-0.4px">50.00 %</div>
<div class="t" style="left:928px;top:170.00px;font-size:13px;color:#000;font-weight:400;letter-spacing:-0.4px">1.000</div>
<div class="t" style="left:978px;top:170.00px;font-size:13px;color:#000;font-weight:400;letter-spacing:-0.4px">1.5</div>
<div style="left:563px;top:188px;width:11px;height:11px;background:#0ff;border:1px solid #808080"></div>
<svg style="position:absolute;left:563px;top:188px;shape-rendering:auto" width="11" height="11" viewBox="0 0 11 11" shape-rendering="crispEdges"><path d="M2 5l2.5 3 4.5-6" fill="none" stroke="#00f" stroke-width="2"/></svg>
<svg style="position:absolute;left:578px;top:186px;shape-rendering:auto" width="17" height="15" viewBox="0 0 17 15" shape-rendering="crispEdges"><ellipse cx="9.2" cy="7.5" rx="6" ry="5.6" fill="#808080"/><ellipse cx="7.7" cy="6" rx="6" ry="5.6" fill="#ff0" stroke="#808000" stroke-width=".6"/><path d="M7.7 3v6.5M5 4.5l5.4 3.5M10.4 4.5l-5.4 3.5" stroke="#00f" stroke-width="1.5"/></svg>
<div class="t" style="left:599px;top:187.00px;font-size:13px;color:#000;font-weight:400;letter-spacing:-0.4px">44-0231</div>
<svg style="position:absolute;left:598px;top:189px;shape-rendering:auto" width="7" height="10" viewBox="0 0 7 10" shape-rendering="crispEdges"><path d="M0 1h6l-3 7z" fill="#800000"/></svg>
<div class="t" style="left:676px;top:187.00px;font-size:13px;color:#000;font-weight:400;">Aluminum Fluoride</div>
<div class="t" style="left:798px;top:187.00px;font-size:13px;color:#000;font-weight:400;">AlF3</div>
<div class="t" style="left:863px;top:187.00px;font-size:13px;color:#000;font-weight:400;letter-spacing:-0.4px">50.00 %</div>
<div class="t" style="left:928px;top:187.00px;font-size:13px;color:#000;font-weight:400;letter-spacing:-0.4px">1.000</div>
<div class="t" style="left:978px;top:187.00px;font-size:13px;color:#000;font-weight:400;letter-spacing:-0.4px">1.5</div>
<div style="left:563px;top:205px;width:11px;height:11px;background:#0ff;border:1px solid #808080"></div>
<svg style="position:absolute;left:563px;top:205px;shape-rendering:auto" width="11" height="11" viewBox="0 0 11 11" shape-rendering="crispEdges"><path d="M2 5l2.5 3 4.5-6" fill="none" stroke="#00f" stroke-width="2"/></svg>
<svg style="position:absolute;left:578px;top:203px;shape-rendering:auto" width="17" height="15" viewBox="0 0 17 15" shape-rendering="crispEdges"><ellipse cx="9.2" cy="7.5" rx="6" ry="5.6" fill="#808080"/><ellipse cx="7.7" cy="6" rx="6" ry="5.6" fill="#ff0" stroke="#808000" stroke-width=".6"/><path d="M5.5 3.5h5M5.5 9.5h5M8 3.5v6" stroke="#00f" stroke-width="1.4"/></svg>
<div class="t" style="left:599px;top:204.00px;font-size:13px;color:#000;font-weight:400;letter-spacing:-0.4px">43-0435</div>
<svg style="position:absolute;left:598px;top:206px;shape-rendering:auto" width="7" height="10" viewBox="0 0 7 10" shape-rendering="crispEdges"><path d="M0 1h6l-3 7z" fill="#f0f"/></svg>
<div class="t" style="left:676px;top:204.00px;font-size:13px;color:#000;font-weight:400;">Aluminum Fluoride</div>
<div class="t" style="left:798px;top:204.00px;font-size:13px;color:#000;font-weight:400;">AlF3</div>
<div class="t" style="left:863px;top:204.00px;font-size:13px;color:#000;font-weight:400;letter-spacing:-0.4px">50.00 %</div>
<div class="t" style="left:928px;top:204.00px;font-size:13px;color:#000;font-weight:400;letter-spacing:-0.4px">1.000</div>
<div class="t" style="left:978px;top:204.00px;font-size:13px;color:#000;font-weight:400;letter-spacing:-0.4px">1.5</div>
<div style="left:563px;top:222px;width:11px;height:11px;background:#0ff;border:1px solid #808080"></div>
<svg style="position:absolute;left:563px;top:222px;shape-rendering:auto" width="11" height="11" viewBox="0 0 11 11" shape-rendering="crispEdges"><path d="M2 5l2.5 3 4.5-6" fill="none" stroke="#00f" stroke-width="2"/></svg>
<svg style="position:absolute;left:579px;top:220px;" width="15" height="11" viewBox="0 0 15 11" shape-rendering="crispEdges"><path d="M4 0h6v1h-6zM2 1h10v1h-10zM1 2h2v1h-2zM9 2h2v1h-2zM12 2h1v1h-1zM0 3h3v1h-3zM5 3h2v1h-2zM9 3h3v1h-3zM13 3h1v1h-1zM0 4h3v1h-3zM5 4h2v1h-2zM9 4h3v1h-3zM13 4h2v1h-2zM0 5h3v1h-3zM5 5h2v1h-2zM9 5h3v1h-3zM13 5h2v1h-2zM0 6h3v1h-3zM5 6h2v1h-2zM9 6h3v1h-3zM13 6h2v1h-2zM1 7h2v1h-2zM9 7h2v1h-2zM12 7h2v1h-2zM4 8h6v1h-6zM12 8h2v1h-2zM10 9h3v1h-3zM4 10h8v1h-8z" fill="#909090"/><path d="M3 2h1v1h-1zM11 2h1v1h-1zM3 3h1v1h-1zM7 3h1v1h-1zM12 3h1v1h-1zM3 4h1v1h-1zM7 4h1v1h-1zM12 4h1v1h-1zM3 5h1v1h-1zM7 5h1v1h-1zM12 5h1v1h-1zM3 6h1v1h-1zM7 6h1v1h-1zM12 6h1v1h-1zM3 7h1v1h-1zM11 7h1v1h-1zM2 8h2v1h-2zM10 8h2v1h-2zM3 9h7v1h-7z" fill="#000"/><path d="M4 2h5v1h-5zM4 3h1v1h-1zM8 3h1v1h-1zM4 4h1v1h-1zM8 4h1v1h-1zM4 5h1v1h-1zM8 5h1v1h-1zM4 6h1v1h-1zM8 6h1v1h-1zM4 7h5v1h-5z" fill="#fff"/></svg>
<div class="t" style="left:599px;top:221.00px;font-size:13px;color:#000;font-weight:400;letter-spacing:-0.4px">01-0011</div>
<svg style="position:absolute;left:598px;top:223px;shape-rendering:auto" width="7" height="10" viewBox="0 0 7 10" shape-rendering="crispEdges"><path d="M0 1h6l-3 7z" fill="#0c0"/></svg>
<div class="t" style="left:676px;top:221.00px;font-size:13px;color:#000;font-weight:400;">Aluminum Fluoride</div>
<div class="t" style="left:798px;top:221.00px;font-size:13px;color:#000;font-weight:400;">AlF3</div>
<div class="t" style="left:863px;top:221.00px;font-size:13px;color:#000;font-weight:400;letter-spacing:-0.4px">50.00 %</div>
<div class="t" style="left:928px;top:221.00px;font-size:13px;color:#000;font-weight:400;letter-spacing:-0.4px">1.000</div>
<div class="t" style="left:978px;top:221.00px;font-size:13px;color:#000;font-weight:400;letter-spacing:-0.4px">1.5</div>
<div style="left:563px;top:239px;width:11px;height:11px;background:#0ff;border:1px solid #808080"></div>
<svg style="position:absolute;left:563px;top:239px;shape-rendering:auto" width="11" height="11" viewBox="0 0 11 11" shape-rendering="crispEdges"><path d="M2 5l2.5 3 4.5-6" fill="none" stroke="#00f" stroke-width="2"/></svg>
<svg style="position:absolute;left:579px;top:237px;" width="15" height="11" viewBox="0 0 15 11" shape-rendering="crispEdges"><path d="M4 0h6v1h-6zM2 1h10v1h-10zM1 2h2v1h-2zM9 2h2v1h-2zM12 2h1v1h-1zM0 3h3v1h-3zM5 3h2v1h-2zM9 3h3v1h-3zM13 3h1v1h-1zM0 4h3v1h-3zM5 4h2v1h-2zM9 4h3v1h-3zM13 4h2v1h-2zM0 5h3v1h-3zM5 5h2v1h-2zM9 5h3v1h-3zM13 5h2v1h-2zM0 6h3v1h-3zM5 6h2v1h-2zM9 6h3v1h-3zM13 6h2v1h-2zM1 7h2v1h-2zM9 7h2v1h-2zM12 7h2v1h-2zM4 8h6v1h-6zM12 8h2v1h-2zM10 9h3v1h-3zM4 10h8v1h-8z" fill="#909090"/><path d="M3 2h1v1h-1zM11 2h1v1h-1zM3 3h1v1h-1zM7 3h1v1h-1zM12 3h1v1h-1zM3 4h1v1h-1zM7 4h1v1h-1zM12 4h1v1h-1zM3 5h1v1h-1zM7 5h1v1h-1zM12 5h1v1h-1zM3 6h1v1h-1zM7 6h1v1h-1zM12 6h1v1h-1zM3 7h1v1h-1zM11 7h1v1h-1zM2 8h2v1h-2zM10 8h2v1h-2zM3 9h7v1h-7z" fill="#000"/><path d="M4 2h5v1h-5zM4 3h1v1h-1zM8 3h1v1h-1zM4 4h1v1h-1zM8 4h1v1h-1zM4 5h1v1h-1zM8 5h1v1h-1zM4 6h1v1h-1zM8 6h1v1h-1zM4 7h5v1h-5z" fill="#fff"/></svg>
<div class="t" style="left:599px;top:238.00px;font-size:13px;color:#000;font-weight:400;letter-spacing:-0.4px">20-0006</div>
<svg style="position:absolute;left:598px;top:240px;shape-rendering:auto" width="7" height="10" viewBox="0 0 7 10" shape-rendering="crispEdges"><path d="M0 1h6l-3 7z" fill="#00f"/></svg>
<div class="t" style="left:676px;top:238.00px;font-size:13px;color:#000;font-weight:400;">Aluminum Fluoride</div>
<div class="t" style="left:798px;top:238.00px;font-size:13px;color:#000;font-weight:400;">AlF3</div>
<div class="t" style="left:863px;top:238.00px;font-size:13px;color:#000;font-weight:400;letter-spacing:-0.4px">50.00 %</div>
<div class="t" style="left:928px;top:238.00px;font-size:13px;color:#000;font-weight:400;letter-spacing:-0.4px">1.000</div>
<div class="t" style="left:978px;top:238.00px;font-size:13px;color:#000;font-weight:400;letter-spacing:-0.4px">1.5</div>
<div style="left:563px;top:256px;width:11px;height:11px;background:#0ff;border:1px solid #808080"></div>
<svg style="position:absolute;left:563px;top:256px;shape-rendering:auto" width="11" height="11" viewBox="0 0 11 11" shape-rendering="crispEdges"><path d="M2 5l2.5 3 4.5-6" fill="none" stroke="#00f" stroke-width="2"/></svg>
<svg style="position:absolute;left:578px;top:254px;shape-rendering:auto" width="17" height="15" viewBox="0 0 17 15" shape-rendering="crispEdges"><ellipse cx="9.2" cy="7.5" rx="6" ry="5.6" fill="#808080"/><ellipse cx="7.7" cy="6" rx="6" ry="5.6" fill="#ff0" stroke="#808000" stroke-width=".6"/><path d="M7.7 3v6.5M5 4.5l5.4 3.5M10.4 4.5l-5.4 3.5" stroke="#00f" stroke-width="1.5"/></svg>
<div class="t" style="left:599px;top:255.00px;font-size:13px;color:#000;font-weight:400;letter-spacing:-0.4px">44-0231</div>
<svg style="position:absolute;left:598px;top:257px;shape-rendering:auto" width="7" height="10" viewBox="0 0 7 10" shape-rendering="crispEdges"><path d="M0 1h6l-3 7z" fill="#c00000"/></svg>
<div class="t" style="left:676px;top:255.00px;font-size:13px;color:#000;font-weight:400;">Aluminum Fluoride</div>
<div class="t" style="left:798px;top:255.00px;font-size:13px;color:#000;font-weight:400;">AlF3</div>
<div class="t" style="left:863px;top:255.00px;font-size:13px;color:#000;font-weight:400;letter-spacing:-0.4px">50.00 %</div>
<div class="t" style="left:928px;top:255.00px;font-size:13px;color:#000;font-weight:400;letter-spacing:-0.4px">1.000</div>
<div class="t" style="left:978px;top:255.00px;font-size:13px;color:#000;font-weight:400;letter-spacing:-0.4px">1.5</div>
<div style="left:563px;top:273px;width:11px;height:11px;background:#0ff;border:1px solid #808080"></div>
<svg style="position:absolute;left:563px;top:273px;shape-rendering:auto" width="11" height="11" viewBox="0 0 11 11" shape-rendering="crispEdges"><path d="M2 5l2.5 3 4.5-6" fill="none" stroke="#00f" stroke-width="2"/></svg>
<svg style="position:absolute;left:579px;top:271px;" width="15" height="11" viewBox="0 0 15 11" shape-rendering="crispEdges"><path d="M4 0h6v1h-6zM2 1h10v1h-10zM1 2h2v1h-2zM9 2h2v1h-2zM12 2h1v1h-1zM0 3h3v1h-3zM5 3h2v1h-2zM9 3h3v1h-3zM13 3h1v1h-1zM0 4h3v1h-3zM5 4h2v1h-2zM9 4h3v1h-3zM13 4h2v1h-2zM0 5h3v1h-3zM5 5h2v1h-2zM9 5h3v1h-3zM13 5h2v1h-2zM0 6h3v1h-3zM5 6h2v1h-2zM9 6h3v1h-3zM13 6h2v1h-2zM1 7h2v1h-2zM9 7h2v1h-2zM12 7h2v1h-2zM4 8h6v1h-6zM12 8h2v1h-2zM10 9h3v1h-3zM4 10h8v1h-8z" fill="#909090"/><path d="M3 2h1v1h-1zM11 2h1v1h-1zM3 3h1v1h-1zM7 3h1v1h-1zM12 3h1v1h-1zM3 4h1v1h-1zM7 4h1v1h-1zM12 4h1v1h-1zM3 5h1v1h-1zM7 5h1v1h-1zM12 5h1v1h-1zM3 6h1v1h-1zM7 6h1v1h-1zM12 6h1v1h-1zM3 7h1v1h-1zM11 7h1v1h-1zM2 8h2v1h-2zM10 8h2v1h-2zM3 9h7v1h-7z" fill="#000"/><path d="M4 2h5v1h-5zM4 3h1v1h-1zM8 3h1v1h-1zM4 4h1v1h-1zM8 4h1v1h-1zM4 5h1v1h-1zM8 5h1v1h-1zM4 6h1v1h-1zM8 6h1v1h-1zM4 7h5v1h-5z" fill="#fff"/></svg>
<div class="t" style="left:599px;top:272.00px;font-size:13px;color:#000;font-weight:400;letter-spacing:-0.4px">29-0138</div>
<svg style="position:absolute;left:598px;top:274px;shape-rendering:auto" width="7" height="10" viewBox="0 0 7 10" shape-rendering="crispEdges"><path d="M0 1h6l-3 7z" fill="#f00"/></svg>
<div class="t" style="left:676px;top:272.00px;font-size:13px;color:#000;font-weight:400;">Aluminum Fluoride</div>
<div class="t" style="left:798px;top:272.00px;font-size:13px;color:#000;font-weight:400;">AlF3</div>
<div class="t" style="left:863px;top:272.00px;font-size:13px;color:#000;font-weight:400;letter-spacing:-0.4px">50.00 %</div>
<div class="t" style="left:928px;top:272.00px;font-size:13px;color:#000;font-weight:400;letter-spacing:-0.4px">1.000</div>
<div class="t" style="left:978px;top:272.00px;font-size:13px;color:#000;font-weight:400;letter-spacing:-0.4px">1.5</div>
<div style="left:563px;top:290px;width:11px;height:11px;background:#0ff;border:1px solid #808080"></div>
<svg style="position:absolute;left:563px;top:290px;shape-rendering:auto" width="11" height="11" viewBox="0 0 11 11" shape-rendering="crispEdges"><path d="M2 5l2.5 3 4.5-6" fill="none" stroke="#00f" stroke-width="2"/></svg>
<svg style="position:absolute;left:579px;top:288px;" width="15" height="11" viewBox="0 0 15 11" shape-rendering="crispEdges"><path d="M4 0h6v1h-6zM2 1h10v1h-10zM1 2h2v1h-2zM9 2h2v1h-2zM12 2h1v1h-1zM0 3h3v1h-3zM5 3h2v1h-2zM9 3h3v1h-3zM13 3h1v1h-1zM0 4h3v1h-3zM5 4h2v1h-2zM9 4h3v1h-3zM13 4h2v1h-2zM0 5h3v1h-3zM5 5h2v1h-2zM9 5h3v1h-3zM13 5h2v1h-2zM0 6h3v1h-3zM5 6h2v1h-2zM9 6h3v1h-3zM13 6h2v1h-2zM1 7h2v1h-2zM9 7h2v1h-2zM12 7h2v1h-2zM4 8h6v1h-6zM12 8h2v1h-2zM10 9h3v1h-3zM4 10h8v1h-8z" fill="#909090"/><path d="M3 2h1v1h-1zM11 2h1v1h-1zM3 3h1v1h-1zM7 3h1v1h-1zM12 3h1v1h-1zM3 4h1v1h-1zM7 4h1v1h-1zM12 4h1v1h-1zM3 5h1v1h-1zM7 5h1v1h-1zM12 5h1v1h-1zM3 6h1v1h-1zM7 6h1v1h-1zM12 6h1v1h-1zM3 7h1v1h-1zM11 7h1v1h-1zM2 8h2v1h-2zM10 8h2v1h-2zM3 9h7v1h-7z" fill="#000"/><path d="M4 2h5v1h-5zM4 3h1v1h-1zM8 3h1v1h-1zM4 4h1v1h-1zM8 4h1v1h-1zM4 5h1v1h-1zM8 5h1v1h-1zM4 6h1v1h-1zM8 6h1v1h-1zM4 7h5v1h-5z" fill="#fff"/></svg>
<div class="t" style="left:599px;top:289.00px;font-size:13px;color:#000;font-weight:400;letter-spacing:-0.4px">03-0355</div>
<svg style="position:absolute;left:598px;top:291px;shape-rendering:auto" width="7" height="10" viewBox="0 0 7 10" shape-rendering="crispEdges"><path d="M0 1h6l-3 7z" fill="#008000"/></svg>
<div class="t" style="left:676px;top:289.00px;font-size:13px;color:#000;font-weight:400;">Aluminum Fluoride</div>
<div class="t" style="left:798px;top:289.00px;font-size:13px;color:#000;font-weight:400;">AlF3</div>
<div class="t" style="left:863px;top:289.00px;font-size:13px;color:#000;font-weight:400;letter-spacing:-0.4px">50.00 %</div>
<div class="t" style="left:928px;top:289.00px;font-size:13px;color:#000;font-weight:400;letter-spacing:-0.4px">1.000</div>
<div class="t" style="left:978px;top:289.00px;font-size:13px;color:#000;font-weight:400;letter-spacing:-0.4px">1.5</div>
<div style="left:563px;top:307px;width:11px;height:11px;background:#0ff;border:1px solid #808080"></div>
<svg style="position:absolute;left:579px;top:305px;" width="15" height="11" viewBox="0 0 15 11" shape-rendering="crispEdges"><path d="M4 0h6v1h-6zM2 1h10v1h-10zM1 2h2v1h-2zM9 2h2v1h-2zM12 2h1v1h-1zM0 3h3v1h-3zM5 3h2v1h-2zM9 3h3v1h-3zM13 3h1v1h-1zM0 4h3v1h-3zM5 4h2v1h-2zM9 4h3v1h-3zM13 4h2v1h-2zM0 5h3v1h-3zM5 5h2v1h-2zM9 5h3v1h-3zM13 5h2v1h-2zM0 6h3v1h-3zM5 6h2v1h-2zM9 6h3v1h-3zM13 6h2v1h-2zM1 7h2v1h-2zM9 7h2v1h-2zM12 7h2v1h-2zM4 8h6v1h-6zM12 8h2v1h-2zM10 9h3v1h-3zM4 10h8v1h-8z" fill="#909090"/><path d="M3 2h1v1h-1zM11 2h1v1h-1zM3 3h1v1h-1zM7 3h1v1h-1zM12 3h1v1h-1zM3 4h1v1h-1zM7 4h1v1h-1zM12 4h1v1h-1zM3 5h1v1h-1zM7 5h1v1h-1zM12 5h1v1h-1zM3 6h1v1h-1zM7 6h1v1h-1zM12 6h1v1h-1zM3 7h1v1h-1zM11 7h1v1h-1zM2 8h2v1h-2zM10 8h2v1h-2zM3 9h7v1h-7z" fill="#000"/><path d="M4 2h5v1h-5zM4 3h1v1h-1zM8 3h1v1h-1zM4 4h1v1h-1zM8 4h1v1h-1zM4 5h1v1h-1zM8 5h1v1h-1zM4 6h1v1h-1zM8 6h1v1h-1zM4 7h5v1h-5z" fill="#fff"/></svg>
<div class="t" style="left:599px;top:306.00px;font-size:13px;color:#000;font-weight:400;letter-spacing:-0.4px">11-0546</div>
<div class="t" style="left:676px;top:306.00px;font-size:13px;color:#000;font-weight:400;">Chromium Coba...</div>
<div class="t" style="left:863px;top:306.00px;font-size:13px;color:#000;font-weight:400;letter-spacing:-0.4px">50.00 %</div>
<div class="t" style="left:928px;top:306.00px;font-size:13px;color:#000;font-weight:400;letter-spacing:-0.4px">1.000</div>
<div class="t" style="left:978px;top:306.00px;font-size:13px;color:#000;font-weight:400;letter-spacing:-0.4px">1.5</div>
<div style="left:610px;top:323px;width:386px;height:17px;background:#f00;border:1px dotted #00c0c0"></div>
<div style="left:563px;top:324px;width:11px;height:11px;background:#00f;border:1px solid #808080"></div>
<svg style="position:absolute;left:563px;top:324px;shape-rendering:auto" width="11" height="11" viewBox="0 0 11 11" shape-rendering="crispEdges"><path d="M2 5l2.5 3 4.5-6" fill="none" stroke="#0ff" stroke-width="2"/></svg>
<svg style="position:absolute;left:579px;top:322px;" width="15" height="11" viewBox="0 0 15 11" shape-rendering="crispEdges"><path d="M4 0h6v1h-6zM2 1h10v1h-10zM1 2h2v1h-2zM9 2h2v1h-2zM12 2h1v1h-1zM0 3h3v1h-3zM5 3h2v1h-2zM9 3h3v1h-3zM13 3h1v1h-1zM0 4h3v1h-3zM5 4h2v1h-2zM9 4h3v1h-3zM13 4h2v1h-2zM0 5h3v1h-3zM5 5h2v1h-2zM9 5h3v1h-3zM13 5h2v1h-2zM0 6h3v1h-3zM5 6h2v1h-2zM9 6h3v1h-3zM13 6h2v1h-2zM1 7h2v1h-2zM9 7h2v1h-2zM12 7h2v1h-2zM4 8h6v1h-6zM12 8h2v1h-2zM10 9h3v1h-3zM4 10h8v1h-8z" fill="#909090"/><path d="M3 2h1v1h-1zM11 2h1v1h-1zM3 3h1v1h-1zM7 3h1v1h-1zM12 3h1v1h-1zM3 4h1v1h-1zM7 4h1v1h-1zM12 4h1v1h-1zM3 5h1v1h-1zM7 5h1v1h-1zM12 5h1v1h-1zM3 6h1v1h-1zM7 6h1v1h-1zM12 6h1v1h-1zM3 7h1v1h-1zM11 7h1v1h-1zM2 8h2v1h-2zM10 8h2v1h-2zM3 9h7v1h-7z" fill="#000"/><path d="M4 2h5v1h-5zM4 3h1v1h-1zM8 3h1v1h-1zM4 4h1v1h-1zM8 4h1v1h-1zM4 5h1v1h-1zM8 5h1v1h-1zM4 6h1v1h-1zM8 6h1v1h-1zM4 7h5v1h-5z" fill="#fff"/></svg>
<div class="t" style="left:612px;top:323.00px;font-size:13px;color:#fff;font-weight:400;letter-spacing:-0.4px">-1189</div>
<svg style="position:absolute;left:598px;top:326px;" width="8" height="9" viewBox="0 0 8 9" shape-rendering="crispEdges"><rect x="0" y="1" width="2" height="2" fill="#0ff"/><rect x="3" y="1" width="3" height="2" fill="#0ff"/><rect x="0" y="5" width="2" height="2" fill="#0ff"/><rect x="3" y="5" width="3" height="2" fill="#0ff"/></svg>
<div class="t" style="left:676px;top:323.00px;font-size:13px;color:#fff;font-weight:400;">Aluminum Fluoride</div>
<div class="t" style="left:798px;top:323.00px;font-size:13px;color:#fff;font-weight:400;">AlF3</div>
<div class="t" style="left:863px;top:323.00px;font-size:13px;color:#fff;font-weight:400;letter-spacing:-0.4px">50.00 %</div>
<div class="t" style="left:928px;top:323.00px;font-size:13px;color:#fff;font-weight:400;letter-spacing:-0.4px">1.000</div>
<div class="t" style="left:978px;top:323.00px;font-size:13px;color:#fff;font-weight:400;letter-spacing:-0.4px">1.5</div>
<div style="left:563px;top:341px;width:11px;height:11px;background:#0ff;border:1px solid #808080"></div>
<svg style="position:absolute;left:579px;top:339px;" width="15" height="11" viewBox="0 0 15 11" shape-rendering="crispEdges"><path d="M4 0h6v1h-6zM2 1h10v1h-10zM1 2h2v1h-2zM9 2h2v1h-2zM12 2h1v1h-1zM0 3h3v1h-3zM5 3h2v1h-2zM9 3h3v1h-3zM13 3h1v1h-1zM0 4h3v1h-3zM5 4h2v1h-2zM9 4h3v1h-3zM13 4h2v1h-2zM0 5h3v1h-3zM5 5h2v1h-2zM9 5h3v1h-3zM13 5h2v1h-2zM0 6h3v1h-3zM5 6h2v1h-2zM9 6h3v1h-3zM13 6h2v1h-2zM1 7h2v1h-2zM9 7h2v1h-2zM12 7h2v1h-2zM4 8h6v1h-6zM12 8h2v1h-2zM10 9h3v1h-3zM4 10h8v1h-8z" fill="#909090"/><path d="M3 2h1v1h-1zM11 2h1v1h-1zM3 3h1v1h-1zM7 3h1v1h-1zM12 3h1v1h-1zM3 4h1v1h-1zM7 4h1v1h-1zM12 4h1v1h-1zM3 5h1v1h-1zM7 5h1v1h-1zM12 5h1v1h-1zM3 6h1v1h-1zM7 6h1v1h-1zM12 6h1v1h-1zM3 7h1v1h-1zM11 7h1v1h-1zM2 8h2v1h-2zM10 8h2v1h-2zM3 9h7v1h-7z" fill="#000"/><path d="M4 2h5v1h-5zM4 3h1v1h-1zM8 3h1v1h-1zM4 4h1v1h-1zM8 4h1v1h-1zM4 5h1v1h-1zM8 5h1v1h-1zM4 6h1v1h-1zM8 6h1v1h-1zM4 7h5v1h-5z" fill="#fff"/></svg>
<div class="t" style="left:599px;top:340.00px;font-size:13px;color:#000;font-weight:400;letter-spacing:-0.4px">02-0154</div>
<div class="t" style="left:676px;top:340.00px;font-size:13px;color:#000;font-weight:400;">Ablykite</div>
<div class="t" style="left:863px;top:340.00px;font-size:13px;color:#000;font-weight:400;letter-spacing:-0.4px">50.00 %</div>
<div class="t" style="left:928px;top:340.00px;font-size:13px;color:#000;font-weight:400;letter-spacing:-0.4px">1.000</div>
<div class="t" style="left:978px;top:340.00px;font-size:13px;color:#000;font-weight:400;letter-spacing:-0.4px">1.5</div>
<div style="left:563px;top:358px;width:11px;height:11px;background:#0ff;border:1px solid #808080"></div>
<svg style="position:absolute;left:579px;top:356px;" width="15" height="11" viewBox="0 0 15 11" shape-rendering="crispEdges"><path d="M4 0h6v1h-6zM2 1h10v1h-10zM1 2h2v1h-2zM9 2h2v1h-2zM12 2h1v1h-1zM0 3h3v1h-3zM5 3h2v1h-2zM9 3h3v1h-3zM13 3h1v1h-1zM0 4h3v1h-3zM5 4h2v1h-2zM9 4h3v1h-3zM13 4h2v1h-2zM0 5h3v1h-3zM5 5h2v1h-2zM9 5h3v1h-3zM13 5h2v1h-2zM0 6h3v1h-3zM5 6h2v1h-2zM9 6h3v1h-3zM13 6h2v1h-2zM1 7h2v1h-2zM9 7h2v1h-2zM12 7h2v1h-2zM4 8h6v1h-6zM12 8h2v1h-2zM10 9h3v1h-3zM4 10h8v1h-8z" fill="#909090"/><path d="M3 2h1v1h-1zM11 2h1v1h-1zM3 3h1v1h-1zM7 3h1v1h-1zM12 3h1v1h-1zM3 4h1v1h-1zM7 4h1v1h-1zM12 4h1v1h-1zM3 5h1v1h-1zM7 5h1v1h-1zM12 5h1v1h-1zM3 6h1v1h-1zM7 6h1v1h-1zM12 6h1v1h-1zM3 7h1v1h-1zM11 7h1v1h-1zM2 8h2v1h-2zM10 8h2v1h-2zM3 9h7v1h-7z" fill="#000"/><path d="M4 2h5v1h-5zM4 3h1v1h-1zM8 3h1v1h-1zM4 4h1v1h-1zM8 4h1v1h-1zM4 5h1v1h-1zM8 5h1v1h-1zM4 6h1v1h-1zM8 6h1v1h-1zM4 7h5v1h-5z" fill="#fff"/></svg>
<div class="t" style="left:599px;top:357.00px;font-size:13px;color:#000;font-weight:400;letter-spacing:-0.4px">29-0001</div>
<div class="t" style="left:676px;top:357.00px;font-size:13px;color:#000;font-weight:400;">Unnamed miner...</div>
<div class="t" style="left:863px;top:357.00px;font-size:13px;color:#000;font-weight:400;letter-spacing:-0.4px">50.00 %</div>
<div class="t" style="left:928px;top:357.00px;font-size:13px;color:#000;font-weight:400;letter-spacing:-0.4px">1.000</div>
<div class="t" style="left:978px;top:357.00px;font-size:13px;color:#000;font-weight:400;letter-spacing:-0.4px">1.5</div>
<div style="left:996px;top:148px;width:16px;height:224px;background:#dfdfdf"></div>
<div style="left:996px;top:148px;width:16px;height:16px;background:#c0c0c0;border-style:solid;border-width:1px;border-color:#dfdfdf #000 #000 #dfdfdf;box-shadow:inset 1px 1px #fff, inset -1px -1px #808080"></div>
<svg style="position:absolute;left:996px;top:148px;shape-rendering:auto" width="16" height="16" viewBox="0 0 16 16" shape-rendering="crispEdges"><path d="M4.0 10.0h7l-3.5-4z" fill="#000"/></svg>
<div style="left:996px;top:284px;width:16px;height:72px;background:#c0c0c0;border-style:solid;border-width:1px;border-color:#dfdfdf #000 #000 #dfdfdf;box-shadow:inset 1px 1px #fff, inset -1px -1px #808080"></div>
<div style="left:996px;top:356px;width:16px;height:16px;background:#c0c0c0;border-style:solid;border-width:1px;border-color:#dfdfdf #000 #000 #dfdfdf;box-shadow:inset 1px 1px #fff, inset -1px -1px #808080"></div>
<svg style="position:absolute;left:996px;top:356px;shape-rendering:auto" width="16" height="16" viewBox="0 0 16 16" shape-rendering="crispEdges"><path d="M4.0 6.0h7l-3.5 4z" fill="#000"/></svg>
<div style="left:560px;top:372px;width:436px;height:16px;background:#dfdfdf"></div>
<div style="left:560px;top:372px;width:16px;height:16px;background:#c0c0c0;border-style:solid;border-width:1px;border-color:#dfdfdf #000 #000 #dfdfdf;box-shadow:inset 1px 1px #fff, inset -1px -1px #808080"></div>
<svg style="position:absolute;left:560px;top:372px;shape-rendering:auto" width="16" height="16" viewBox="0 0 16 16" shape-rendering="crispEdges"><path d="M9.0 4.0v7l-4-3.5z" fill="#000"/></svg>
<div style="left:576px;top:372px;width:296px;height:16px;background:#c0c0c0;border-style:solid;border-width:1px;border-color:#dfdfdf #000 #000 #dfdfdf;box-shadow:inset 1px 1px #fff, inset -1px -1px #808080"></div>
<div style="left:980px;top:372px;width:16px;height:16px;background:#c0c0c0;border-style:solid;border-width:1px;border-color:#dfdfdf #000 #000 #dfdfdf;box-shadow:inset 1px 1px #fff, inset -1px -1px #808080"></div>
<svg style="position:absolute;left:980px;top:372px;shape-rendering:auto" width="16" height="16" viewBox="0 0 16 16" shape-rendering="crispEdges"><path d="M6.0 4.0v7l4-3.5z" fill="#000"/></svg>
<div style="left:996px;top:372px;width:16px;height:16px;background:#c0c0c0"></div>
<div style="left:559px;top:398px;width:13px;height:13px;background:#fff;border-style:solid;border-width:1px;border-color:#808080 #fff #fff #808080;box-shadow:inset 1px 1px #000, inset -1px -1px #dfdfdf"></div>
<div class="t" style="left:576px;top:398.00px;font-size:13px;color:#000;font-weight:400;">Gray All Except Current</div>
<div class="t" style="left:766px;top:398.00px;font-size:13px;color:#000;font-weight:400;">Items Selected:  1</div>
<svg style="position:absolute;left:956px;top:395px;shape-rendering:auto" width="18" height="18" viewBox="0 0 18 18" shape-rendering="crispEdges"><path d="M4 16v-9q0-5 5-5t5 5v9l-2-1.5-1.5 1.5-1.5-1.5-1.5 1.5-1.5-1.5z" fill="#fff" stroke="#000" stroke-width="1"/><rect x="7" y="6" width="1.5" height="3" fill="#000"/><rect x="10" y="6" width="1.5" height="3" fill="#000"/></svg>
<svg style="position:absolute;left:986px;top:398px;shape-rendering:auto" width="20" height="14" viewBox="0 0 20 14" shape-rendering="crispEdges"><path d="M2 2h16l-8 9z" fill="none" stroke="#fff" stroke-width="1.2"/><path d="M10 11l8-9" stroke="#808080" stroke-width="1"/></svg>
<div style="left:544px;top:417px;width:479px;height:1px;background:#dfdfdf"></div>
<div style="left:544px;top:418px;width:479px;height:1px;background:#000"></div>
<div style="left:545px;top:419px;width:1px;height:200px;background:#808080"></div>
<div style="left:546px;top:419px;width:1px;height:199px;background:#fff"></div>
<div style="left:546px;top:618px;width:468px;height:1px;background:#808080"></div>
<div style="left:545px;top:619px;width:470px;height:1px;background:#fff"></div>
<div style="left:1013px;top:419px;width:1px;height:200px;background:#808080"></div>
<div style="left:1014px;top:419px;width:1px;height:201px;background:#fff"></div>
<div style="left:0;top:419px;width:1013px;height:200px;overflow:hidden">
<div style="left:554px;top:-4.00px;width:23px;height:20px;background:#800000;border-style:solid;border-width:1px;border-color:#dfdfdf #000 #000 #dfdfdf"></div>
<div class="t" style="left:552.5px;width:23px;text-align:center;top:1.11px;font-size:10.5px;color:#fff">H</div>
<div style="left:979px;top:-4.00px;width:23px;height:20px;background:#800000;border-style:solid;border-width:1px;border-color:#dfdfdf #000 #000 #dfdfdf"></div>
<div class="t" style="left:977.5px;width:23px;text-align:center;top:1.11px;font-size:10.5px;color:#fff">He</div>
<div style="left:554px;top:18.00px;width:23px;height:20px;background:#800000;border-style:solid;border-width:1px;border-color:#dfdfdf #000 #000 #dfdfdf"></div>
<div class="t" style="left:552.5px;width:23px;text-align:center;top:23.11px;font-size:10.5px;color:#fff">Li</div>
<div style="left:579px;top:18.00px;width:23px;height:20px;background:#800000;border-style:solid;border-width:1px;border-color:#dfdfdf #000 #000 #dfdfdf"></div>
<div class="t" style="left:577.5px;width:23px;text-align:center;top:23.11px;font-size:10.5px;color:#fff">Be</div>
<div style="left:854px;top:18.00px;width:23px;height:20px;background:#800000;border-style:solid;border-width:1px;border-color:#dfdfdf #000 #000 #dfdfdf"></div>
<div class="t" style="left:852.5px;width:23px;text-align:center;top:23.11px;font-size:10.5px;color:#fff">B</div>
<div style="left:879px;top:18.00px;width:23px;height:20px;background:#800000;border-style:solid;border-width:1px;border-color:#dfdfdf #000 #000 #dfdfdf"></div>
<div class="t" style="left:877.5px;width:23px;text-align:center;top:23.11px;font-size:10.5px;color:#fff">C</div>
<div style="left:904px;top:18.00px;width:23px;height:20px;background:#800000;border-style:solid;border-width:1px;border-color:#dfdfdf #000 #000 #dfdfdf"></div>
<div class="t" style="left:902.5px;width:23px;text-align:center;top:23.11px;font-size:10.5px;color:#fff">N</div>
<div style="left:929px;top:18.00px;width:23px;height:20px;background:#800000;border-style:solid;border-width:1px;border-color:#dfdfdf #000 #000 #dfdfdf"></div>
<div class="t" style="left:927.5px;width:23px;text-align:center;top:23.11px;font-size:10.5px;color:#fff">O</div>
<div style="left:954px;top:18.00px;width:23px;height:20px;background:#008000;border-style:solid;border-width:1px;border-color:#000 #dfdfdf #dfdfdf #000"></div>
<div class="t" style="left:952.5px;width:23px;text-align:center;top:24.11px;font-size:10.5px;color:#fff">F</div>
<div style="left:979px;top:18.00px;width:23px;height:20px;background:#800000;border-style:solid;border-width:1px;border-color:#dfdfdf #000 #000 #dfdfdf"></div>
<div class="t" style="left:977.5px;width:23px;text-align:center;top:23.11px;font-size:10.5px;color:#fff">Ne</div>
<div style="left:554px;top:40.00px;width:23px;height:20px;background:#800000;border-style:solid;border-width:1px;border-color:#dfdfdf #000 #000 #dfdfdf"></div>
<div class="t" style="left:552.5px;width:23px;text-align:center;top:45.11px;font-size:10.5px;color:#fff">Na</div>
<div style="left:579px;top:40.00px;width:23px;height:20px;background:#800000;border-style:solid;border-width:1px;border-color:#dfdfdf #000 #000 #dfdfdf"></div>
<div class="t" style="left:577.5px;width:23px;text-align:center;top:45.11px;font-size:10.5px;color:#fff">Mg</div>
<div style="left:854px;top:40.00px;width:23px;height:20px;background:#008000;border-style:solid;border-width:1px;border-color:#000 #dfdfdf #dfdfdf #000"></div>
<div class="t" style="left:852.5px;width:23px;text-align:center;top:46.11px;font-size:10.5px;color:#fff">Al</div>
<div style="left:879px;top:40.00px;width:23px;height:20px;background:#800000;border-style:solid;border-width:1px;border-color:#dfdfdf #000 #000 #dfdfdf"></div>
<div class="t" style="left:877.5px;width:23px;text-align:center;top:45.11px;font-size:10.5px;color:#fff">Si</div>
<div style="left:904px;top:40.00px;width:23px;height:20px;background:#800000;border-style:solid;border-width:1px;border-color:#dfdfdf #000 #000 #dfdfdf"></div>
<div class="t" style="left:902.5px;width:23px;text-align:center;top:45.11px;font-size:10.5px;color:#fff">P</div>
<div style="left:929px;top:40.00px;width:23px;height:20px;background:#800000;border-style:solid;border-width:1px;border-color:#dfdfdf #000 #000 #dfdfdf"></div>
<div class="t" style="left:927.5px;width:23px;text-align:center;top:45.11px;font-size:10.5px;color:#fff">S</div>
<div style="left:954px;top:40.00px;width:23px;height:20px;background:#800000;border-style:solid;border-width:1px;border-color:#dfdfdf #000 #000 #dfdfdf"></div>
<div class="t" style="left:952.5px;width:23px;text-align:center;top:45.11px;font-size:10.5px;color:#fff">Cl</div>
<div style="left:979px;top:40.00px;width:23px;height:20px;background:#800000;border-style:solid;border-width:1px;border-color:#dfdfdf #000 #000 #dfdfdf"></div>
<div class="t" style="left:977.5px;width:23px;text-align:center;top:45.11px;font-size:10.5px;color:#fff">Ar</div>
<div style="left:554px;top:62.00px;width:23px;height:20px;background:#800000;border-style:solid;border-width:1px;border-color:#dfdfdf #000 #000 #dfdfdf"></div>
<div class="t" style="left:552.5px;width:23px;text-align:center;top:67.11px;font-size:10.5px;color:#fff">K</div>
<div style="left:579px;top:62.00px;width:23px;height:20px;background:#800000;border-style:solid;border-width:1px;border-color:#dfdfdf #000 #000 #dfdfdf"></div>
<div class="t" style="left:577.5px;width:23px;text-align:center;top:67.11px;font-size:10.5px;color:#fff">Ca</div>
<div style="left:604px;top:62.00px;width:23px;height:20px;background:#800000;border-style:solid;border-width:1px;border-color:#dfdfdf #000 #000 #dfdfdf"></div>
<div class="t" style="left:602.5px;width:23px;text-align:center;top:67.11px;font-size:10.5px;color:#fff">Sc</div>
<div style="left:629px;top:62.00px;width:23px;height:20px;background:#800000;border-style:solid;border-width:1px;border-color:#dfdfdf #000 #000 #dfdfdf"></div>
<div class="t" style="left:627.5px;width:23px;text-align:center;top:67.11px;font-size:10.5px;color:#fff">Ti</div>
<div style="left:654px;top:62.00px;width:23px;height:20px;background:#800000;border-style:solid;border-width:1px;border-color:#dfdfdf #000 #000 #dfdfdf"></div>
<div class="t" style="left:652.5px;width:23px;text-align:center;top:67.11px;font-size:10.5px;color:#fff">V</div>
<div style="left:679px;top:62.00px;width:23px;height:20px;background:#800000;border-style:solid;border-width:1px;border-color:#dfdfdf #000 #000 #dfdfdf"></div>
<div class="t" style="left:677.5px;width:23px;text-align:center;top:67.11px;font-size:10.5px;color:#fff">Cr</div>
<div style="left:704px;top:62.00px;width:23px;height:20px;background:#800000;border-style:solid;border-width:1px;border-color:#dfdfdf #000 #000 #dfdfdf"></div>
<div class="t" style="left:702.5px;width:23px;text-align:center;top:67.11px;font-size:10.5px;color:#fff">Mn</div>
<div style="left:729px;top:62.00px;width:23px;height:20px;background:#800000;border-style:solid;border-width:1px;border-color:#dfdfdf #000 #000 #dfdfdf"></div>
<div class="t" style="left:727.5px;width:23px;text-align:center;top:67.11px;font-size:10.5px;color:#fff">Fe</div>
<div style="left:754px;top:62.00px;width:23px;height:20px;background:#800000;border-style:solid;border-width:1px;border-color:#dfdfdf #000 #000 #dfdfdf"></div>
<div class="t" style="left:752.5px;width:23px;text-align:center;top:67.11px;font-size:10.5px;color:#fff">Co</div>
<div style="left:779px;top:62.00px;width:23px;height:20px;background:#800000;border-style:solid;border-width:1px;border-color:#dfdfdf #000 #000 #dfdfdf"></div>
<div class="t" style="left:777.5px;width:23px;text-align:center;top:67.11px;font-size:10.5px;color:#fff">Ni</div>
<div style="left:804px;top:62.00px;width:23px;height:20px;background:#800000;border-style:solid;border-width:1px;border-color:#dfdfdf #000 #000 #dfdfdf"></div>
<div class="t" style="left:802.5px;width:23px;text-align:center;top:67.11px;font-size:10.5px;color:#fff">Cu</div>
<div style="left:829px;top:62.00px;width:23px;height:20px;background:#800000;border-style:solid;border-width:1px;border-color:#dfdfdf #000 #000 #dfdfdf"></div>
<div class="t" style="left:827.5px;width:23px;text-align:center;top:67.11px;font-size:10.5px;color:#fff">Zn</div>
<div style="left:854px;top:62.00px;width:23px;height:20px;background:#800000;border-style:solid;border-width:1px;border-color:#dfdfdf #000 #000 #dfdfdf"></div>
<div class="t" style="left:852.5px;width:23px;text-align:center;top:67.11px;font-size:10.5px;color:#fff">Ga</div>
<div style="left:879px;top:62.00px;width:23px;height:20px;background:#800000;border-style:solid;border-width:1px;border-color:#dfdfdf #000 #000 #dfdfdf"></div>
<div class="t" style="left:877.5px;width:23px;text-align:center;top:67.11px;font-size:10.5px;color:#fff">Ge</div>
<div style="left:904px;top:62.00px;width:23px;height:20px;background:#800000;border-style:solid;border-width:1px;border-color:#dfdfdf #000 #000 #dfdfdf"></div>
<div class="t" style="left:902.5px;width:23px;text-align:center;top:67.11px;font-size:10.5px;color:#fff">As</div>
<div style="left:929px;top:62.00px;width:23px;height:20px;background:#800000;border-style:solid;border-width:1px;border-color:#dfdfdf #000 #000 #dfdfdf"></div>
<div class="t" style="left:927.5px;width:23px;text-align:center;top:67.11px;font-size:10.5px;color:#fff">Se</div>
<div style="left:954px;top:62.00px;width:23px;height:20px;background:#800000;border-style:solid;border-width:1px;border-color:#dfdfdf #000 #000 #dfdfdf"></div>
<div class="t" style="left:952.5px;width:23px;text-align:center;top:67.11px;font-size:10.5px;color:#fff">Br</div>
<div style="left:979px;top:62.00px;width:23px;height:20px;background:#800000;border-style:solid;border-width:1px;border-color:#dfdfdf #000 #000 #dfdfdf"></div>
<div class="t" style="left:977.5px;width:23px;text-align:center;top:67.11px;font-size:10.5px;color:#fff">Kr</div>
<div style="left:554px;top:84.00px;width:23px;height:20px;background:#800000;border-style:solid;border-width:1px;border-color:#dfdfdf #000 #000 #dfdfdf"></div>
<div class="t" style="left:552.5px;width:23px;text-align:center;top:89.11px;font-size:10.5px;color:#fff">Rb</div>
<div style="left:579px;top:84.00px;width:23px;height:20px;background:#800000;border-style:solid;border-width:1px;border-color:#dfdfdf #000 #000 #dfdfdf"></div>
<div class="t" style="left:577.5px;width:23px;text-align:center;top:89.11px;font-size:10.5px;color:#fff">Sr</div>
<div style="left:604px;top:84.00px;width:23px;height:20px;background:#800000;border-style:solid;border-width:1px;border-color:#dfdfdf #000 #000 #dfdfdf"></div>
<div class="t" style="left:602.5px;width:23px;text-align:center;top:89.11px;font-size:10.5px;color:#fff">Y</div>
<div style="left:629px;top:84.00px;width:23px;height:20px;background:#800000;border-style:solid;border-width:1px;border-color:#dfdfdf #000 #000 #dfdfdf"></div>
<div class="t" style="left:627.5px;width:23px;text-align:center;top:89.11px;font-size:10.5px;color:#fff">Zr</div>
<div style="left:654px;top:84.00px;width:23px;height:20px;background:#800000;border-style:solid;border-width:1px;border-color:#dfdfdf #000 #000 #dfdfdf"></div>
<div class="t" style="left:652.5px;width:23px;text-align:center;top:89.11px;font-size:10.5px;color:#fff">Nb</div>
<div style="left:679px;top:84.00px;width:23px;height:20px;background:#800000;border-style:solid;border-width:1px;border-color:#dfdfdf #000 #000 #dfdfdf"></div>
<div class="t" style="left:677.5px;width:23px;text-align:center;top:89.11px;font-size:10.5px;color:#fff">Mo</div>
<div style="left:704px;top:84.00px;width:23px;height:20px;background:#800000;border-style:solid;border-width:1px;border-color:#dfdfdf #000 #000 #dfdfdf"></div>
<div class="t" style="left:702.5px;width:23px;text-align:center;top:89.11px;font-size:10.5px;color:#fff">Tc</div>
<div style="left:729px;top:84.00px;width:23px;height:20px;background:#800000;border-style:solid;border-width:1px;border-color:#dfdfdf #000 #000 #dfdfdf"></div>
<div class="t" style="left:727.5px;width:23px;text-align:center;top:89.11px;font-size:10.5px;color:#fff">Ru</div>
<div style="left:754px;top:84.00px;width:23px;height:20px;background:#800000;border-style:solid;border-width:1px;border-color:#dfdfdf #000 #000 #dfdfdf"></div>
<div class="t" style="left:752.5px;width:23px;text-align:center;top:89.11px;font-size:10.5px;color:#fff">Rh</div>
<div style="left:779px;top:84.00px;width:23px;height:20px;background:#800000;border-style:solid;border-width:1px;border-color:#dfdfdf #000 #000 #dfdfdf"></div>
<div class="t" style="left:777.5px;width:23px;text-align:center;top:89.11px;font-size:10.5px;color:#fff">Pd</div>
<div style="left:804px;top:84.00px;width:23px;height:20px;background:#800000;border-style:solid;border-width:1px;border-color:#dfdfdf #000 #000 #dfdfdf"></div>
<div class="t" style="left:802.5px;width:23px;text-align:center;top:89.11px;font-size:10.5px;color:#fff">Ag</div>
<div style="left:829px;top:84.00px;width:23px;height:20px;background:#800000;border-style:solid;border-width:1px;border-color:#dfdfdf #000 #000 #dfdfdf"></div>
<div class="t" style="left:827.5px;width:23px;text-align:center;top:89.11px;font-size:10.5px;color:#fff">Cd</div>
<div style="left:854px;top:84.00px;width:23px;height:20px;background:#800000;border-style:solid;border-width:1px;border-color:#dfdfdf #000 #000 #dfdfdf"></div>
<div class="t" style="left:852.5px;width:23px;text-align:center;top:89.11px;font-size:10.5px;color:#fff">In</div>
<div style="left:879px;top:84.00px;width:23px;height:20px;background:#800000;border-style:solid;border-width:1px;border-color:#dfdfdf #000 #000 #dfdfdf"></div>
<div class="t" style="left:877.5px;width:23px;text-align:center;top:89.11px;font-size:10.5px;color:#fff">Sn</div>
<div style="left:904px;top:84.00px;width:23px;height:20px;background:#800000;border-style:solid;border-width:1px;border-color:#dfdfdf #000 #000 #dfdfdf"></div>
<div class="t" style="left:902.5px;width:23px;text-align:center;top:89.11px;font-size:10.5px;color:#fff">Sb</div>
<div style="left:929px;top:84.00px;width:23px;height:20px;background:#800000;border-style:solid;border-width:1px;border-color:#dfdfdf #000 #000 #dfdfdf"></div>
<div class="t" style="left:927.5px;width:23px;text-align:center;top:89.11px;font-size:10.5px;color:#fff">Te</div>
<div style="left:954px;top:84.00px;width:23px;height:20px;background:#800000;border-style:solid;border-width:1px;border-color:#dfdfdf #000 #000 #dfdfdf"></div>
<div class="t" style="left:952.5px;width:23px;text-align:center;top:89.11px;font-size:10.5px;color:#fff">I</div>
<div style="left:979px;top:84.00px;width:23px;height:20px;background:#800000;border-style:solid;border-width:1px;border-color:#dfdfdf #000 #000 #dfdfdf"></div>
<div class="t" style="left:977.5px;width:23px;text-align:center;top:89.11px;font-size:10.5px;color:#fff">Xe</div>
<div style="left:554px;top:106.00px;width:23px;height:20px;background:#800000;border-style:solid;border-width:1px;border-color:#dfdfdf #000 #000 #dfdfdf"></div>
<div class="t" style="left:552.5px;width:23px;text-align:center;top:111.11px;font-size:10.5px;color:#fff">Cs</div>
<div style="left:579px;top:106.00px;width:23px;height:20px;background:#800000;border-style:solid;border-width:1px;border-color:#dfdfdf #000 #000 #dfdfdf"></div>
<div class="t" style="left:577.5px;width:23px;text-align:center;top:111.11px;font-size:10.5px;color:#fff">Ba</div>
<div style="left:604px;top:106.00px;width:23px;height:20px;background:#800000;border-style:solid;border-width:1px;border-color:#dfdfdf #000 #000 #dfdfdf"></div>
<div class="t" style="left:602.5px;width:23px;text-align:center;top:111.11px;font-size:10.5px;color:#fff">La</div>
<div style="left:629px;top:106.00px;width:23px;height:20px;background:#800000;border-style:solid;border-width:1px;border-color:#dfdfdf #000 #000 #dfdfdf"></div>
<div class="t" style="left:627.5px;width:23px;text-align:center;top:111.11px;font-size:10.5px;color:#fff">Hf</div>
<div style="left:654px;top:106.00px;width:23px;height:20px;background:#800000;border-style:solid;border-width:1px;border-color:#dfdfdf #000 #000 #dfdfdf"></div>
<div class="t" style="left:652.5px;width:23px;text-align:center;top:111.11px;font-size:10.5px;color:#fff">Ta</div>
<div style="left:679px;top:106.00px;width:23px;height:20px;background:#800000;border-style:solid;border-width:1px;border-color:#dfdfdf #000 #000 #dfdfdf"></div>
<div class="t" style="left:677.5px;width:23px;text-align:center;top:111.11px;font-size:10.5px;color:#fff">W</div>
<div style="left:704px;top:106.00px;width:23px;height:20px;background:#800000;border-style:solid;border-width:1px;border-color:#dfdfdf #000 #000 #dfdfdf"></div>
<div class="t" style="left:702.5px;width:23px;text-align:center;top:111.11px;font-size:10.5px;color:#fff">Re</div>
<div style="left:729px;top:106.00px;width:23px;height:20px;background:#800000;border-style:solid;border-width:1px;border-color:#dfdfdf #000 #000 #dfdfdf"></div>
<div class="t" style="left:727.5px;width:23px;text-align:center;top:111.11px;font-size:10.5px;color:#fff">Os</div>
<div style="left:754px;top:106.00px;width:23px;height:20px;background:#800000;border-style:solid;border-width:1px;border-color:#dfdfdf #000 #000 #dfdfdf"></div>
<div class="t" style="left:752.5px;width:23px;text-align:center;top:111.11px;font-size:10.5px;color:#fff">Ir</div>
<div style="left:779px;top:106.00px;width:23px;height:20px;background:#800000;border-style:solid;border-width:1px;border-color:#dfdfdf #000 #000 #dfdfdf"></div>
<div class="t" style="left:777.5px;width:23px;text-align:center;top:111.11px;font-size:10.5px;color:#fff">Pt</div>
<div style="left:804px;top:106.00px;width:23px;height:20px;background:#800000;border-style:solid;border-width:1px;border-color:#dfdfdf #000 #000 #dfdfdf"></div>
<div class="t" style="left:802.5px;width:23px;text-align:center;top:111.11px;font-size:10.5px;color:#fff">Au</div>
<div style="left:829px;top:106.00px;width:23px;height:20px;background:#800000;border-style:solid;border-width:1px;border-color:#dfdfdf #000 #000 #dfdfdf"></div>
<div class="t" style="left:827.5px;width:23px;text-align:center;top:111.11px;font-size:10.5px;color:#fff">Hg</div>
<div style="left:854px;top:106.00px;width:23px;height:20px;background:#800000;border-style:solid;border-width:1px;border-color:#dfdfdf #000 #000 #dfdfdf"></div>
<div class="t" style="left:852.5px;width:23px;text-align:center;top:111.11px;font-size:10.5px;color:#fff">Tl</div>
<div style="left:879px;top:106.00px;width:23px;height:20px;background:#800000;border-style:solid;border-width:1px;border-color:#dfdfdf #000 #000 #dfdfdf"></div>
<div class="t" style="left:877.5px;width:23px;text-align:center;top:111.11px;font-size:10.5px;color:#fff">Pb</div>
<div style="left:904px;top:106.00px;width:23px;height:20px;background:#800000;border-style:solid;border-width:1px;border-color:#dfdfdf #000 #000 #dfdfdf"></div>
<div class="t" style="left:902.5px;width:23px;text-align:center;top:111.11px;font-size:10.5px;color:#fff">Bi</div>
<div style="left:929px;top:106.00px;width:23px;height:20px;background:#800000;border-style:solid;border-width:1px;border-color:#dfdfdf #000 #000 #dfdfdf"></div>
<div class="t" style="left:927.5px;width:23px;text-align:center;top:111.11px;font-size:10.5px;color:#fff">Po</div>
<div style="left:954px;top:106.00px;width:23px;height:20px;background:#800000;border-style:solid;border-width:1px;border-color:#dfdfdf #000 #000 #dfdfdf"></div>
<div class="t" style="left:952.5px;width:23px;text-align:center;top:111.11px;font-size:10.5px;color:#fff">At</div>
<div style="left:979px;top:106.00px;width:23px;height:20px;background:#800000;border-style:solid;border-width:1px;border-color:#dfdfdf #000 #000 #dfdfdf"></div>
<div class="t" style="left:977.5px;width:23px;text-align:center;top:111.11px;font-size:10.5px;color:#fff">Rn</div>
<div style="left:554px;top:128.00px;width:23px;height:20px;background:#800000;border-style:solid;border-width:1px;border-color:#dfdfdf #000 #000 #dfdfdf"></div>
<div class="t" style="left:552.5px;width:23px;text-align:center;top:133.11px;font-size:10.5px;color:#fff">Fr</div>
<div style="left:579px;top:128.00px;width:23px;height:20px;background:#800000;border-style:solid;border-width:1px;border-color:#dfdfdf #000 #000 #dfdfdf"></div>
<div class="t" style="left:577.5px;width:23px;text-align:center;top:133.11px;font-size:10.5px;color:#fff">Ra</div>
<div style="left:604px;top:128.00px;width:23px;height:20px;background:#800000;border-style:solid;border-width:1px;border-color:#dfdfdf #000 #000 #dfdfdf"></div>
<div class="t" style="left:602.5px;width:23px;text-align:center;top:133.11px;font-size:10.5px;color:#fff">Ac</div>
<div style="left:654px;top:150.00px;width:23px;height:20px;background:#800000;border-style:solid;border-width:1px;border-color:#dfdfdf #000 #000 #dfdfdf"></div>
<div class="t" style="left:652.5px;width:23px;text-align:center;top:155.11px;font-size:10.5px;color:#fff">Ce</div>
<div style="left:679px;top:150.00px;width:23px;height:20px;background:#800000;border-style:solid;border-width:1px;border-color:#dfdfdf #000 #000 #dfdfdf"></div>
<div class="t" style="left:677.5px;width:23px;text-align:center;top:155.11px;font-size:10.5px;color:#fff">Pr</div>
<div style="left:704px;top:150.00px;width:23px;height:20px;background:#800000;border-style:solid;border-width:1px;border-color:#dfdfdf #000 #000 #dfdfdf"></div>
<div class="t" style="left:702.5px;width:23px;text-align:center;top:155.11px;font-size:10.5px;color:#fff">Nd</div>
<div style="left:729px;top:150.00px;width:23px;height:20px;background:#800000;border-style:solid;border-width:1px;border-color:#dfdfdf #000 #000 #dfdfdf"></div>
<div class="t" style="left:727.5px;width:23px;text-align:center;top:155.11px;font-size:10.5px;color:#fff">Pm</div>
<div style="left:754px;top:150.00px;width:23px;height:20px;background:#800000;border-style:solid;border-width:1px;border-color:#dfdfdf #000 #000 #dfdfdf"></div>
<div class="t" style="left:752.5px;width:23px;text-align:center;top:155.11px;font-size:10.5px;color:#fff">Sm</div>
<div style="left:779px;top:150.00px;width:23px;height:20px;background:#800000;border-style:solid;border-width:1px;border-color:#dfdfdf #000 #000 #dfdfdf"></div>
<div class="t" style="left:777.5px;width:23px;text-align:center;top:155.11px;font-size:10.5px;color:#fff">Eu</div>
<div style="left:804px;top:150.00px;width:23px;height:20px;background:#800000;border-style:solid;border-width:1px;border-color:#dfdfdf #000 #000 #dfdfdf"></div>
<div class="t" style="left:802.5px;width:23px;text-align:center;top:155.11px;font-size:10.5px;color:#fff">Gd</div>
<div style="left:829px;top:150.00px;width:23px;height:20px;background:#800000;border-style:solid;border-width:1px;border-color:#dfdfdf #000 #000 #dfdfdf"></div>
<div class="t" style="left:827.5px;width:23px;text-align:center;top:155.11px;font-size:10.5px;color:#fff">Tb</div>
<div style="left:854px;top:150.00px;width:23px;height:20px;background:#800000;border-style:solid;border-width:1px;border-color:#dfdfdf #000 #000 #dfdfdf"></div>
<div class="t" style="left:852.5px;width:23px;text-align:center;top:155.11px;font-size:10.5px;color:#fff">Dy</div>
<div style="left:879px;top:150.00px;width:23px;height:20px;background:#800000;border-style:solid;border-width:1px;border-color:#dfdfdf #000 #000 #dfdfdf"></div>
<div class="t" style="left:877.5px;width:23px;text-align:center;top:155.11px;font-size:10.5px;color:#fff">Ho</div>
<div style="left:904px;top:150.00px;width:23px;height:20px;background:#800000;border-style:solid;border-width:1px;border-color:#dfdfdf #000 #000 #dfdfdf"></div>
<div class="t" style="left:902.5px;width:23px;text-align:center;top:155.11px;font-size:10.5px;color:#fff">Er</div>
<div style="left:929px;top:150.00px;width:23px;height:20px;background:#800000;border-style:solid;border-width:1px;border-color:#dfdfdf #000 #000 #dfdfdf"></div>
<div class="t" style="left:927.5px;width:23px;text-align:center;top:155.11px;font-size:10.5px;color:#fff">Tm</div>
<div style="left:954px;top:150.00px;width:23px;height:20px;background:#800000;border-style:solid;border-width:1px;border-color:#dfdfdf #000 #000 #dfdfdf"></div>
<div class="t" style="left:952.5px;width:23px;text-align:center;top:155.11px;font-size:10.5px;color:#fff">Yb</div>
<div style="left:979px;top:150.00px;width:23px;height:20px;background:#800000;border-style:solid;border-width:1px;border-color:#dfdfdf #000 #000 #dfdfdf"></div>
<div class="t" style="left:977.5px;width:23px;text-align:center;top:155.11px;font-size:10.5px;color:#fff">Lu</div>
<div style="left:654px;top:172.00px;width:23px;height:20px;background:#800000;border-style:solid;border-width:1px;border-color:#dfdfdf #000 #000 #dfdfdf"></div>
<div class="t" style="left:652.5px;width:23px;text-align:center;top:177.11px;font-size:10.5px;color:#fff">Th</div>
<div style="left:679px;top:172.00px;width:23px;height:20px;background:#800000;border-style:solid;border-width:1px;border-color:#dfdfdf #000 #000 #dfdfdf"></div>
<div class="t" style="left:677.5px;width:23px;text-align:center;top:177.11px;font-size:10.5px;color:#fff">Pa</div>
<div style="left:704px;top:172.00px;width:23px;height:20px;background:#800000;border-style:solid;border-width:1px;border-color:#dfdfdf #000 #000 #dfdfdf"></div>
<div class="t" style="left:702.5px;width:23px;text-align:center;top:177.11px;font-size:10.5px;color:#fff">U</div>
<div style="left:729px;top:172.00px;width:23px;height:20px;background:#800000;border-style:solid;border-width:1px;border-color:#dfdfdf #000 #000 #dfdfdf"></div>
<div class="t" style="left:727.5px;width:23px;text-align:center;top:177.11px;font-size:10.5px;color:#fff">Np</div>
<div style="left:754px;top:172.00px;width:23px;height:20px;background:#800000;border-style:solid;border-width:1px;border-color:#dfdfdf #000 #000 #dfdfdf"></div>
<div class="t" style="left:752.5px;width:23px;text-align:center;top:177.11px;font-size:10.5px;color:#fff">Pu</div>
<div style="left:779px;top:172.00px;width:23px;height:20px;background:#800000;border-style:solid;border-width:1px;border-color:#dfdfdf #000 #000 #dfdfdf"></div>
<div class="t" style="left:777.5px;width:23px;text-align:center;top:177.11px;font-size:10.5px;color:#fff">Am</div>
<div style="left:804px;top:172.00px;width:23px;height:20px;background:#800000;border-style:solid;border-width:1px;border-color:#dfdfdf #000 #000 #dfdfdf"></div>
<div class="t" style="left:802.5px;width:23px;text-align:center;top:177.11px;font-size:10.5px;color:#fff">Cm</div>
<div style="left:829px;top:172.00px;width:23px;height:20px;background:#800000;border-style:solid;border-width:1px;border-color:#dfdfdf #000 #000 #dfdfdf"></div>
<div class="t" style="left:827.5px;width:23px;text-align:center;top:177.11px;font-size:10.5px;color:#fff">Bk</div>
<div style="left:854px;top:172.00px;width:23px;height:20px;background:#800000;border-style:solid;border-width:1px;border-color:#dfdfdf #000 #000 #dfdfdf"></div>
<div class="t" style="left:852.5px;width:23px;text-align:center;top:177.11px;font-size:10.5px;color:#fff">Cf</div>
<div style="left:879px;top:172.00px;width:23px;height:20px;background:#800000;border-style:solid;border-width:1px;border-color:#dfdfdf #000 #000 #dfdfdf"></div>
<div class="t" style="left:877.5px;width:23px;text-align:center;top:177.11px;font-size:10.5px;color:#fff">Es</div>
<div style="left:904px;top:172.00px;width:23px;height:20px;background:#800000;border-style:solid;border-width:1px;border-color:#dfdfdf #000 #000 #dfdfdf"></div>
<div class="t" style="left:902.5px;width:23px;text-align:center;top:177.11px;font-size:10.5px;color:#fff">Fm</div>
<div style="left:929px;top:172.00px;width:23px;height:20px;background:#800000;border-style:solid;border-width:1px;border-color:#dfdfdf #000 #000 #dfdfdf"></div>
<div class="t" style="left:927.5px;width:23px;text-align:center;top:177.11px;font-size:10.5px;color:#fff">Md</div>
<div style="left:954px;top:172.00px;width:23px;height:20px;background:#800000;border-style:solid;border-width:1px;border-color:#dfdfdf #000 #000 #dfdfdf"></div>
<div class="t" style="left:952.5px;width:23px;text-align:center;top:177.11px;font-size:10.5px;color:#fff">No</div>
</div>
<div style="left:551px;top:579px;width:13px;height:13px;background:#fff;border-style:solid;border-width:1px;border-color:#808080 #fff #fff #808080;box-shadow:inset 1px 1px #000, inset -1px -1px #dfdfdf"></div>
<svg style="position:absolute;left:551px;top:579px;shape-rendering:auto" width="13" height="13" viewBox="0 0 13 13" shape-rendering="crispEdges"><path d="M3 6l2 2.5 4.5-5" fill="none" stroke="#000" stroke-width="2"/></svg>
<div class="t" style="left:569px;top:579.00px;font-size:13px;color:#000;font-weight:400;">Lanthanides</div>
<div style="left:551px;top:599px;width:13px;height:13px;background:#fff;border-style:solid;border-width:1px;border-color:#808080 #fff #fff #808080;box-shadow:inset 1px 1px #000, inset -1px -1px #dfdfdf"></div>
<div class="t" style="left:569px;top:599.00px;font-size:13px;color:#000;font-weight:400;">Toggle All</div>
<div style="left:545px;top:632px;width:89px;height:28px;background:#c0c0c0;border-style:solid;border-width:1px;border-color:#fff #000 #000 #fff;box-shadow:inset -1px -1px #808080, inset 1px 1px #dfdfdf"></div>
<div class="t" style="left:545.00px;width:89px;text-align:center;top:638.57px;font-size:13.5px;color:#000;font-weight:400;">Read</div>
<div style="left:639px;top:632px;width:89px;height:28px;background:#c0c0c0;border-style:solid;border-width:1px;border-color:#fff #000 #000 #fff;box-shadow:inset -1px -1px #808080, inset 1px 1px #dfdfdf"></div>
<div class="t" style="left:639.00px;width:89px;text-align:center;top:638.57px;font-size:13.5px;color:#000;font-weight:400;">Save</div>
<div style="left:838px;top:632px;width:89px;height:28px;background:#c0c0c0;border-style:solid;border-width:1px;border-color:#fff #000 #000 #fff;box-shadow:inset -1px -1px #808080, inset 1px 1px #dfdfdf"></div>
<div class="t" style="left:838.00px;width:89px;text-align:center;top:638.57px;font-size:13.5px;color:#000;font-weight:400;">Default</div>
<div style="left:931px;top:632px;width:89px;height:28px;background:#c0c0c0;border:1px solid #000;box-shadow:inset 1px 1px #fff, inset -1px -1px #000, inset -2px -2px #808080"></div>
<div class="t" style="left:931.00px;width:89px;text-align:center;top:638.57px;font-size:13.5px;color:#000;font-weight:400;">Search</div>
<div style="left:5px;top:692px;width:1px;height:1px;background:#000"></div>
<div style="left:91px;top:692px;width:929px;height:1px;background:#000"></div>
<svg style="position:absolute;left:0px;top:686px;" width="100" height="32" viewBox="0 0 100 32" shape-rendering="crispEdges"><path d="M8.5 5.5v20l4 4h76l2-2v-22" fill="#c0c0c0" stroke="none"/><path d="M8.5 5.5v20" stroke="#fff"/><path d="M9 26l4 4" stroke="#fff"/><path d="M13 29.5h75" stroke="#000"/><path d="M88 29.5l2.5-2.5v-22" fill="none" stroke="#000"/><path d="M12 28.5h75" stroke="#808080"/></svg>
<svg style="position:absolute;left:12px;top:694px;shape-rendering:auto" width="18" height="18" viewBox="0 0 18 18" shape-rendering="crispEdges"><rect x="1" y="2" width="11" height="13" fill="#0ff" stroke="#000" stroke-width=".6"/><circle cx="9" cy="8" r="3.5" fill="#c0c0c0" stroke="#000" stroke-width="1.2"/><rect x="8" y="7" width="2" height="2" fill="#00f"/><path d="M11 11l4 4" stroke="#000" stroke-width="1.5"/><path d="M3 5v6" stroke="#00f"/></svg>
<div class="t" style="left:36px;top:698.86px;font-size:10.8px;color:#000;font-weight:400;">Talf32.E...</div>
<div class="t" style="left:3px;top:725.00px;font-size:13px;color:#000;font-weight:400;">For Help, press F1</div>
<div style="left:891px;top:722px;width:33px;height:18px;border-style:solid;border-width:1px;border-color:#808080 #fff #fff #808080"></div>
<div style="left:926px;top:722px;width:37px;height:18px;border-style:solid;border-width:1px;border-color:#808080 #fff #fff #808080"></div>
<div class="t" style="left:926.00px;width:37px;text-align:center;top:725.00px;font-size:13px;color:#000;font-weight:400;">NUM</div>
<div style="left:965px;top:722px;width:41px;height:18px;border-style:solid;border-width:1px;border-color:#808080 #fff #fff #808080"></div>
<div class="t" style="left:965.00px;width:41px;text-align:center;top:725.00px;font-size:13px;color:#000;font-weight:400;">SCRL</div>
<svg style="position:absolute;left:1006px;top:724px;shape-rendering:auto" width="18" height="17" viewBox="0 0 18 17" shape-rendering="crispEdges"><path d="M4 16L16 4M8 16L16 8M12 16L16 12" stroke="#fff" stroke-width="1"/><path d="M5 16L16 5M9 16L16 9M13 16L16 13" stroke="#808080" stroke-width="1.3"/></svg>
<div style="left:0px;top:741px;width:1024px;height:1px;background:#dfdfdf"></div>
<div style="left:0px;top:742px;width:1024px;height:1px;background:#fff"></div>
<div style="left:2px;top:744px;width:93px;height:22px;background:#c0c0c0;border-style:solid;border-width:1px;border-color:#fff #000 #000 #fff;box-shadow:inset -1px -1px #808080;"></div>
<svg style="position:absolute;left:6px;top:748px;" width="16" height="13" viewBox="0 0 16 13" shape-rendering="crispEdges"><path d="M9 0h4v1h-4zM7 1h8v1h-8zM0 2h1v1h-1zM6 2h2v1h-2zM10 2h2v1h-2zM14 2h2v1h-2zM0 3h1v1h-1zM2 3h5v1h-5zM9 3h3v1h-3zM14 3h2v1h-2zM2 4h5v1h-5zM9 4h3v1h-3zM14 4h2v1h-2zM6 5h1v1h-1zM9 5h4v1h-4zM15 5h1v1h-1zM6 6h10v1h-10zM6 7h1v1h-1zM9 7h3v1h-3zM14 7h2v1h-2zM6 8h1v1h-1zM9 8h3v1h-3zM14 8h2v1h-2zM6 9h1v1h-1zM9 9h4v1h-4zM15 9h1v1h-1zM0 10h1v1h-1zM2 10h14v1h-14zM0 11h1v1h-1zM2 11h8v1h-8zM12 11h4v1h-4zM6 12h3v1h-3zM14 12h2v1h-2z" fill="#000"/><path d="M8 2h2v1h-2zM7 3h2v1h-2zM7 4h2v1h-2zM0 5h1v1h-1zM2 5h4v1h-4zM7 5h2v1h-2zM0 6h1v1h-1zM2 6h4v1h-4z" fill="#f00"/><path d="M12 2h2v1h-2zM12 3h2v1h-2zM12 4h2v1h-2zM13 5h2v1h-2z" fill="#0f0"/><path d="M0 7h1v1h-1zM2 7h4v1h-4zM7 7h2v1h-2zM0 8h1v1h-1zM2 8h4v1h-4zM7 8h2v1h-2zM2 9h4v1h-4zM7 9h2v1h-2z" fill="#00f"/><path d="M12 7h2v1h-2zM12 8h2v1h-2zM13 9h2v1h-2z" fill="#ff0"/></svg>
<div class="t" style="left:24px;top:747.90px;font-size:14.3px;color:#000;font-weight:700;">Démarrer</div>
<div style="left:98px;top:744px;width:160px;height:22px;background:#c0c0c0;border-style:solid;border-width:1px;border-color:#fff #000 #000 #fff;box-shadow:inset -1px -1px #808080;"></div>
<svg style="position:absolute;left:102px;top:747px;shape-rendering:auto" width="18" height="17" viewBox="0 0 18 17" shape-rendering="crispEdges"><path d="M1 4h5l1 1h9v11h-15z" fill="#ff0" stroke="#808000" stroke-width=".8"/><circle cx="8" cy="9" r="4" fill="#0ff" stroke="#000080" stroke-width="1.2"/><path d="M11 12l4 4" stroke="#00f" stroke-width="2"/></svg>
<div class="t" style="left:120.5px;top:749.00px;font-size:13px;color:#000;font-weight:400;">Explorateur - Disquett...</div>
<div style="left:261px;top:744px;width:159px;height:22px;background-color:#fff;background-image:repeating-conic-gradient(#c0c0c0 0 25%, #fff 0 50%);background-size:2px 2px;border-style:solid;border-width:1px;border-color:#000 #fff #fff #000;box-shadow:inset 1px 1px #808080"></div>
<svg style="position:absolute;left:265px;top:747px;shape-rendering:auto" width="18" height="17" viewBox="0 0 18 17" shape-rendering="crispEdges"><circle cx="7" cy="8" r="5" fill="#c0c0c0" stroke="#000" stroke-width="1.2"/><path d="M10 2l5 3v9l-5-2z" fill="#0ff" stroke="#000" stroke-width=".6"/><path d="M2 14q5 3 13 0" stroke="#0ff" stroke-width="2"/></svg>
<div class="t" style="left:284px;top:748.30px;font-size:15px;color:#000;font-weight:700;">EVA - [Talf32.EV...</div>
<div style="left:919px;top:744px;width:103px;height:22px;border-style:solid;border-width:1px;border-color:#808080 #fff #fff #808080"></div>
<svg style="position:absolute;left:922px;top:746px;shape-rendering:auto" width="50" height="18" viewBox="0 0 50 18" shape-rendering="crispEdges"><rect x="2" y="3" width="11" height="9" fill="#00f" stroke="#000" stroke-width=".8"/><rect x="1" y="12" width="13" height="3" fill="#c0c0c0" stroke="#000" stroke-width=".6"/><path d="M5 15l9-9" stroke="#ff0" stroke-width="1.5"/><rect x="11" y="8" width="3" height="7" fill="#f00"/><path d="M18 2h14l-7 13z" fill="#800080" stroke="#000" stroke-width=".8"/><path d="M20 5h10" stroke="#f0f" stroke-width="1.5"/><circle cx="42" cy="9" r="7" fill="#00c" stroke="#000" stroke-width=".6"/><path d="M38 4q3 2 2 5t3 5M43 3q3 3 1 6" stroke="#080" stroke-width="2.5" fill="none"/></svg>
<div class="t" style="left:983px;top:750.00px;font-size:13px;color:#000;font-weight:400;">08:34</div>
<svg style="position:absolute;left:2px;top:1px;shape-rendering:auto" width="18" height="17" viewBox="0 0 18 17" shape-rendering="crispEdges"><path d="M2 12q3-2 7-1l5 2 2-2-3 4-7 1z" fill="#0ff"/><path d="M11 2l4 3v6l-2 2" fill="none" stroke="#0ff" stroke-width="2"/><circle cx="7.5" cy="6.5" r="4" fill="none" stroke="#c0c0c0" stroke-width="1" stroke-dasharray="2 1"/><rect x="7" y="6" width="2" height="2" fill="#fff"/><rect x="13" y="5" width="1" height="4" fill="#00f"/><path d="M11 10l3 3" stroke="#fff" stroke-width="1" stroke-dasharray="1 1"/></svg>
<svg style="position:absolute;left:3px;top:19px;shape-rendering:auto" width="18" height="19" viewBox="0 0 18 19" shape-rendering="crispEdges"><rect x="1.5" y="1.5" width="11" height="15" fill="#0ff" stroke="#000"/><circle cx="9" cy="8" r="4" fill="#0ff" stroke="#6b4a4a" stroke-width="1.3"/><rect x="9" y="6" width="2" height="4" fill="#00f"/><rect x="3" y="6" width="1" height="5" fill="#00f"/><path d="M12 11l4 4" stroke="#000" stroke-width="2"/><path d="M12.5 11.5l3 3" stroke="#fff" stroke-width=".6"/><rect x="10" y="13" width="2" height="2" fill="#00f"/></svg>
<svg style="position:absolute;left:567px;top:121px;" width="16" height="15" viewBox="0 0 16 15" shape-rendering="crispEdges"><path d="M6 0h2v1h-2zM5 1h2v1h-2zM5 2h1v1h-1zM4 3h2v1h-2zM4 4h2v1h-2zM4 5h2v1h-2zM4 6h1v1h-1zM0 7h4v1h-4zM4 8h1v1h-1zM4 9h2v1h-2zM4 10h2v1h-2zM4 11h2v1h-2zM5 12h1v1h-1zM5 13h2v1h-2zM6 14h2v1h-2z" fill="#00f"/><path d="M11 0h2v1h-2zM10 1h4v1h-4zM9 2h6v1h-6zM8 3h8v1h-8zM10 4h4v1h-4zM10 5h4v1h-4zM10 7h4v1h-4zM10 8h4v1h-4zM8 9h8v1h-8zM9 10h6v1h-6zM10 11h4v1h-4zM11 12h2v1h-2z" fill="#000"/></svg>
<svg style="position:absolute;left:596px;top:119px;" width="12" height="13" viewBox="0 0 12 13" shape-rendering="crispEdges"><path d="M5 0h2v1h-2zM4 1h4v1h-4zM3 2h6v1h-6zM2 3h8v1h-8zM1 4h10v1h-10zM0 5h12v1h-12zM4 6h4v1h-4zM4 7h4v1h-4zM4 9h4v1h-4zM4 11h4v1h-4zM4 12h4v1h-4z" fill="#000"/></svg>
<svg style="position:absolute;left:624px;top:119px;" width="12" height="13" viewBox="0 0 12 13" shape-rendering="crispEdges"><path d="M4 0h4v1h-4zM4 2h4v1h-4zM4 3h4v1h-4zM4 5h4v1h-4zM4 6h4v1h-4zM0 7h12v1h-12zM1 8h10v1h-10zM2 9h8v1h-8zM3 10h6v1h-6zM4 11h4v1h-4zM5 12h2v1h-2z" fill="#000"/></svg>
<svg style="position:absolute;left:649px;top:119px;" width="17" height="14" viewBox="0 0 17 14" shape-rendering="crispEdges"><path d="M5 0h6v1h-6zM3 1h2v1h-2zM11 1h2v1h-2zM2 2h1v1h-1zM13 2h1v1h-1zM15 2h1v1h-1zM2 3h1v1h-1zM14 3h2v1h-2zM1 4h1v1h-1zM14 4h1v1h-1zM2 5h1v1h-1zM3 6h1v1h-1zM2 8h1v1h-1zM13 8h1v1h-1zM1 9h3v1h-3zM14 9h1v1h-1zM14 10h1v1h-1zM1 11h1v1h-1zM3 11h1v1h-1zM14 11h1v1h-1zM4 12h2v1h-2zM12 12h2v1h-2zM6 13h6v1h-6z" fill="#f00"/><path d="M0 3h2v1h-2zM3 3h11v1h-11zM16 3h1v1h-1zM0 4h1v1h-1zM16 4h1v1h-1zM0 5h1v1h-1zM16 5h1v1h-1zM0 6h1v1h-1zM16 6h1v1h-1zM0 7h1v1h-1zM16 7h1v1h-1zM0 8h1v1h-1zM16 8h1v1h-1zM0 9h1v1h-1zM16 9h1v1h-1zM0 10h14v1h-14zM15 10h2v1h-2z" fill="#000"/><path d="M2 4h6v1h-6zM1 5h1v1h-1zM3 5h5v1h-5zM1 6h2v1h-2zM4 6h4v1h-4zM1 7h7v1h-7zM1 8h1v1h-1zM3 8h5v1h-5zM4 9h4v1h-4z" fill="#fff"/><path d="M8 4h6v1h-6zM15 4h1v1h-1zM8 5h8v1h-8zM8 6h8v1h-8zM8 7h8v1h-8zM8 8h5v1h-5zM14 8h2v1h-2zM8 9h6v1h-6zM15 9h1v1h-1z" fill="#00f"/></svg>
<svg style="position:absolute;left:698px;top:119px;" width="9" height="14" viewBox="0 0 9 14" shape-rendering="crispEdges"><path d="M2 0h1v1h-1zM7 0h1v1h-1zM2 1h1v1h-1zM7 1h1v1h-1zM3 2h1v1h-1zM6 2h1v1h-1zM3 3h1v1h-1zM6 3h1v1h-1zM4 4h2v1h-2zM4 5h2v1h-2zM4 6h1v1h-1z" fill="#000"/><path d="M2 7h2v1h-2zM5 7h3v1h-3zM1 8h1v1h-1zM4 8h2v1h-2zM8 8h1v1h-1zM0 9h1v1h-1zM4 9h1v1h-1zM8 9h1v1h-1zM0 10h1v1h-1zM4 10h1v1h-1zM8 10h1v1h-1zM0 11h1v1h-1zM4 11h1v1h-1zM7 11h1v1h-1zM1 12h1v1h-1zM3 12h1v1h-1zM5 12h2v1h-2zM2 13h1v1h-1z" fill="#000080"/></svg>
<svg style="position:absolute;left:722px;top:119px;" width="11" height="13" viewBox="0 0 11 13" shape-rendering="crispEdges"><path d="M0 0h6v1h-6zM0 1h1v1h-1zM5 1h2v1h-2zM0 2h1v1h-1zM2 2h2v1h-2zM5 2h1v1h-1zM7 2h1v1h-1zM0 3h1v1h-1zM0 4h1v1h-1zM2 4h3v1h-3zM0 5h1v1h-1zM0 6h1v1h-1zM2 6h3v1h-3zM7 6h2v1h-2zM0 7h1v1h-1zM0 8h5v1h-5zM7 8h3v1h-3zM7 10h3v1h-3z" fill="#000"/><path d="M1 1h4v1h-4zM1 2h1v1h-1zM4 2h1v1h-1zM6 2h1v1h-1zM1 3h4v1h-4zM1 4h1v1h-1zM6 4h3v1h-3zM1 5h4v1h-4zM6 5h4v1h-4zM1 6h1v1h-1zM6 6h1v1h-1zM9 6h1v1h-1zM1 7h4v1h-4zM6 7h4v1h-4zM6 8h1v1h-1zM6 9h4v1h-4zM6 10h1v1h-1zM6 11h4v1h-4z" fill="#fff"/><path d="M5 3h5v1h-5zM5 4h1v1h-1zM9 4h2v1h-2zM5 5h1v1h-1zM10 5h1v1h-1zM5 6h1v1h-1zM10 6h1v1h-1zM5 7h1v1h-1zM10 7h1v1h-1zM5 8h1v1h-1zM10 8h1v1h-1zM5 9h1v1h-1zM10 9h1v1h-1zM5 10h1v1h-1zM10 10h1v1h-1zM5 11h1v1h-1zM10 11h1v1h-1zM5 12h6v1h-6z" fill="#000080"/></svg>
<svg style="position:absolute;left:751px;top:119px;" width="16" height="14" viewBox="0 0 16 14" shape-rendering="crispEdges"><path d="M5 0h4v1h-4zM4 1h1v1h-1zM9 1h1v1h-1zM0 2h13v1h-13zM0 3h1v1h-1zM12 3h1v1h-1zM0 4h1v1h-1zM11 4h1v1h-1zM0 5h1v1h-1zM11 5h1v1h-1zM0 6h1v1h-1zM8 6h7v1h-7zM0 7h1v1h-1zM8 7h1v1h-1zM14 7h1v1h-1zM0 8h1v1h-1zM8 8h1v1h-1zM11 8h2v1h-2zM14 8h1v1h-1zM0 9h1v1h-1zM8 9h1v1h-1zM14 9h1v1h-1zM0 10h1v1h-1zM8 10h1v1h-1zM11 10h2v1h-2zM14 10h1v1h-1zM0 11h9v1h-9zM14 11h1v1h-1zM8 12h7v1h-7z" fill="#808080"/><path d="M5 1h4v1h-4zM1 3h11v1h-11zM13 3h1v1h-1zM1 4h1v1h-1zM12 4h1v1h-1zM1 5h1v1h-1zM12 5h1v1h-1zM1 6h1v1h-1zM1 7h1v1h-1zM9 7h5v1h-5zM15 7h1v1h-1zM1 8h1v1h-1zM9 8h1v1h-1zM15 8h1v1h-1zM1 9h1v1h-1zM9 9h1v1h-1zM15 9h1v1h-1zM1 10h1v1h-1zM9 10h1v1h-1zM15 10h1v1h-1zM9 11h1v1h-1zM15 11h1v1h-1zM1 12h7v1h-7zM15 12h1v1h-1zM8 13h8v1h-8z" fill="#fff"/></svg>
<svg style="position:absolute;left:778px;top:120px;" width="13" height="12" viewBox="0 0 13 12" shape-rendering="crispEdges"><path d="M0 0h2v1h-2zM11 0h1v1h-1zM1 1h2v1h-2zM10 1h2v1h-2zM2 2h2v1h-2zM9 2h2v1h-2zM3 3h2v1h-2zM8 3h2v1h-2zM4 4h2v1h-2zM7 4h2v1h-2zM5 5h3v1h-3zM5 6h3v1h-3zM4 7h2v1h-2zM7 7h2v1h-2zM3 8h2v1h-2zM8 8h2v1h-2zM2 9h2v1h-2zM9 9h2v1h-2zM1 10h2v1h-2zM10 10h2v1h-2zM0 11h2v1h-2zM11 11h2v1h-2z" fill="#f00"/></svg>
<svg style="position:absolute;left:805px;top:119px;" width="13" height="12" viewBox="0 0 13 12" shape-rendering="crispEdges"><path d="M6 0h4v1h-4zM5 1h2v1h-2zM10 1h1v1h-1zM4 2h2v1h-2zM10 2h1v1h-1zM12 2h1v1h-1zM2 3h4v1h-4zM11 3h2v1h-2zM3 4h1v1h-1zM10 4h1v1h-1zM12 4h1v1h-1z" fill="#f00"/><path d="M0 1h5v1h-5zM0 2h1v1h-1zM6 2h2v1h-2zM0 3h1v1h-1zM0 4h1v1h-1zM0 5h1v1h-1zM2 5h2v1h-2zM0 6h1v1h-1zM7 6h4v1h-4zM0 7h1v1h-1zM2 7h2v1h-2zM0 8h6v1h-6zM7 8h4v1h-4zM7 10h4v1h-4z" fill="#000"/><path d="M1 2h3v1h-3zM1 3h1v1h-1zM6 3h1v1h-1zM1 4h1v1h-1zM4 4h2v1h-2zM7 4h3v1h-3zM1 5h1v1h-1zM4 5h2v1h-2zM7 5h4v1h-4zM1 6h5v1h-5zM1 7h1v1h-1zM4 7h2v1h-2zM7 7h4v1h-4zM7 9h4v1h-4z" fill="#fff"/><path d="M7 3h4v1h-4zM6 4h1v1h-1zM11 4h1v1h-1zM6 5h1v1h-1zM11 5h1v1h-1zM6 6h1v1h-1zM11 6h1v1h-1zM6 7h1v1h-1zM11 7h1v1h-1zM6 8h1v1h-1zM11 8h1v1h-1zM6 9h1v1h-1zM11 9h1v1h-1zM6 10h1v1h-1zM11 10h1v1h-1zM6 11h6v1h-6z" fill="#000080"/></svg>
</body></html>
